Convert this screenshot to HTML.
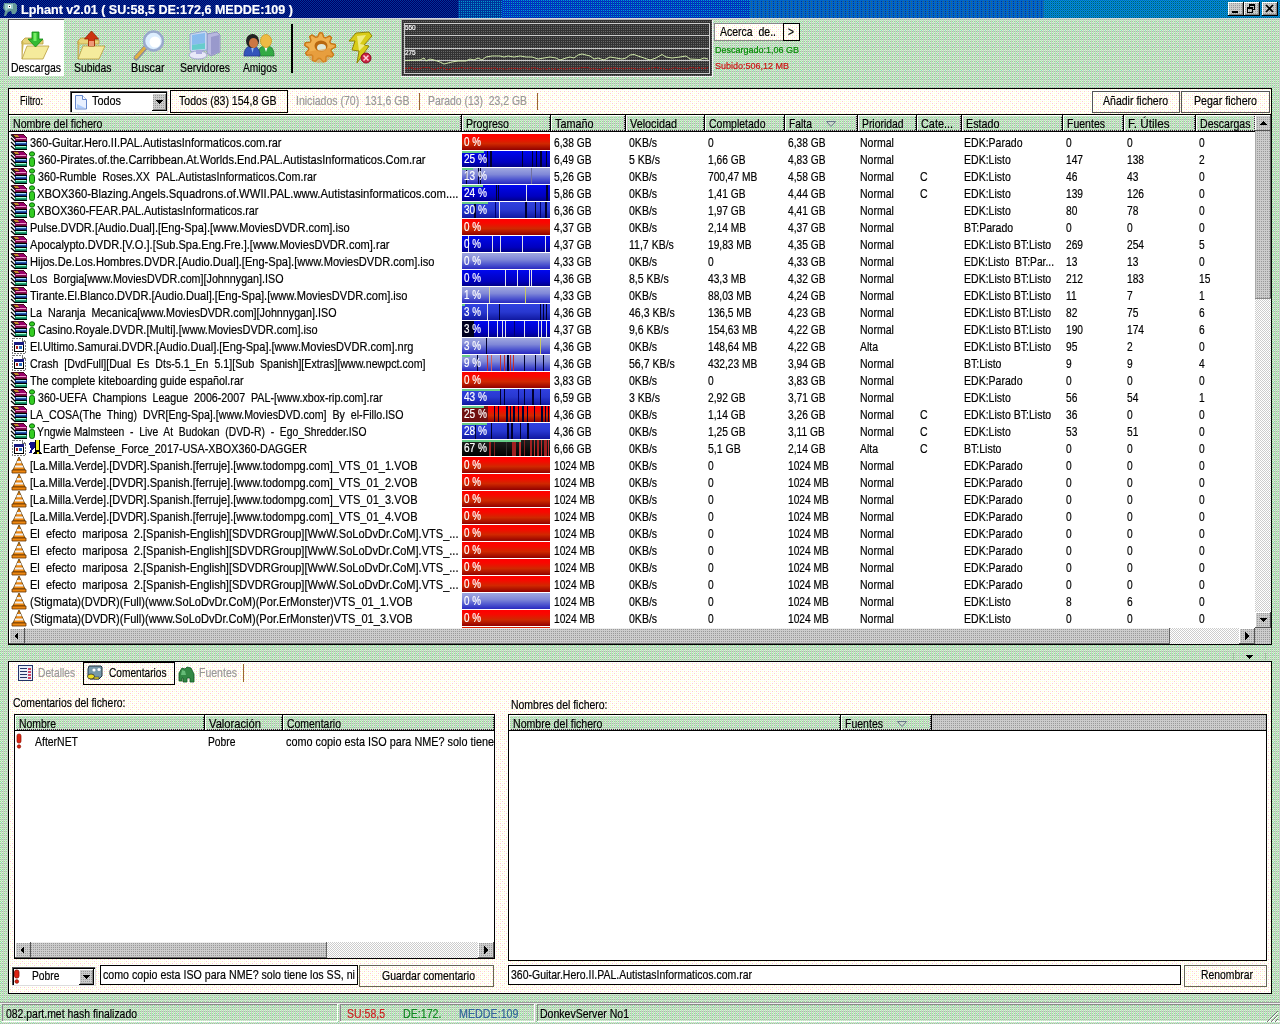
<!DOCTYPE html>
<html><head><meta charset="utf-8"><title>Lphant v2.01</title>
<style>
html,body{margin:0;padding:0;}
body{width:1280px;height:1024px;overflow:hidden;position:relative;background:#bfdcbf;font-family:"Liberation Sans",sans-serif;}
#base{position:absolute;left:0;top:0;width:1280px;height:1024px;display:block;}
#txt{position:absolute;left:0;top:0;width:1280px;height:1024px;will-change:transform;}
.t{position:absolute;white-space:pre;-webkit-text-stroke:.2px;transform-origin:0 0;font-family:"Liberation Sans",sans-serif;}
</style></head><body>
<svg id="base" width="1280" height="1024" viewBox="0 0 1280 1024" shape-rendering="crispEdges">
<defs><pattern id="bg" width="8" height="8" patternUnits="userSpaceOnUse"><rect width="8" height="8" fill="#cccccc"/><rect x="0" y="0" width="1" height="1" fill="#ccffcc"/><rect x="2" y="0" width="1" height="1" fill="#ccffcc"/><rect x="4" y="0" width="1" height="1" fill="#ccffcc"/><rect x="6" y="0" width="1" height="1" fill="#ccffcc"/><rect x="0" y="1" width="1" height="1" fill="#99cc99"/><rect x="1" y="1" width="1" height="1" fill="#ccffcc"/><rect x="2" y="1" width="1" height="1" fill="#99cc99"/><rect x="4" y="1" width="1" height="1" fill="#99cc99"/><rect x="5" y="1" width="1" height="1" fill="#ccffcc"/><rect x="6" y="1" width="1" height="1" fill="#99cc99"/><rect x="0" y="2" width="1" height="1" fill="#ccffcc"/><rect x="2" y="2" width="1" height="1" fill="#ccffcc"/><rect x="4" y="2" width="1" height="1" fill="#ccffcc"/><rect x="6" y="2" width="1" height="1" fill="#ccffcc"/><rect x="0" y="3" width="1" height="1" fill="#99cc99"/><rect x="2" y="3" width="1" height="1" fill="#99cc99"/><rect x="4" y="3" width="1" height="1" fill="#99cc99"/><rect x="6" y="3" width="1" height="1" fill="#99cc99"/><rect x="0" y="4" width="1" height="1" fill="#ccffcc"/><rect x="2" y="4" width="1" height="1" fill="#ccffcc"/><rect x="4" y="4" width="1" height="1" fill="#ccffcc"/><rect x="6" y="4" width="1" height="1" fill="#ccffcc"/><rect x="0" y="5" width="1" height="1" fill="#99cc99"/><rect x="1" y="5" width="1" height="1" fill="#ccffcc"/><rect x="2" y="5" width="1" height="1" fill="#99cc99"/><rect x="4" y="5" width="1" height="1" fill="#99cc99"/><rect x="5" y="5" width="1" height="1" fill="#ccffcc"/><rect x="6" y="5" width="1" height="1" fill="#99cc99"/><rect x="0" y="6" width="1" height="1" fill="#ccffcc"/><rect x="1" y="6" width="1" height="1" fill="#99cccc"/><rect x="2" y="6" width="1" height="1" fill="#ccffcc"/><rect x="4" y="6" width="1" height="1" fill="#ccffcc"/><rect x="6" y="6" width="1" height="1" fill="#ccffcc"/><rect x="0" y="7" width="1" height="1" fill="#99cc99"/><rect x="2" y="7" width="1" height="1" fill="#99cc99"/><rect x="4" y="7" width="1" height="1" fill="#99cc99"/><rect x="6" y="7" width="1" height="1" fill="#99cc99"/></pattern><pattern id="cream" width="8" height="8" patternUnits="userSpaceOnUse"><rect width="8" height="8" fill="#ffffff"/><rect x="2" y="1" width="1" height="1" fill="#ffffcc"/><rect x="4" y="1" width="1" height="1" fill="#ffffcc"/><rect x="6" y="1" width="1" height="1" fill="#ffcccc"/><rect x="0" y="1" width="1" height="1" fill="#ffffcc"/><rect x="2" y="3" width="1" height="1" fill="#ffffcc"/><rect x="4" y="3" width="1" height="1" fill="#ffcccc"/><rect x="6" y="3" width="1" height="1" fill="#ffffcc"/><rect x="0" y="3" width="1" height="1" fill="#ffcccc"/><rect x="2" y="5" width="1" height="1" fill="#ffcccc"/><rect x="4" y="5" width="1" height="1" fill="#ffffcc"/><rect x="6" y="5" width="1" height="1" fill="#ffffcc"/><rect x="0" y="5" width="1" height="1" fill="#ffffcc"/><rect x="2" y="7" width="1" height="1" fill="#ffffcc"/><rect x="4" y="7" width="1" height="1" fill="#ffcccc"/><rect x="6" y="7" width="1" height="1" fill="#ffffcc"/><rect x="0" y="7" width="1" height="1" fill="#ffcccc"/></pattern><pattern id="face" width="2" height="2" patternUnits="userSpaceOnUse"><rect width="2" height="2" fill="#cccccc"/><rect x="1" y="1" width="1" height="1" fill="#999999"/></pattern><pattern id="track" width="2" height="2" patternUnits="userSpaceOnUse"><rect width="2" height="2" fill="#ffffff"/><rect x="0" y="0" width="1" height="1" fill="#cccccc"/><rect x="1" y="1" width="1" height="1" fill="#cccccc"/></pattern><pattern id="gbg" width="2" height="2" patternUnits="userSpaceOnUse"><rect width="2" height="2" fill="#333333"/><rect x="1" y="1" width="1" height="1" fill="#666666"/></pattern><pattern id="tb1" width="2" height="2" patternUnits="userSpaceOnUse"><rect width="2" height="2" fill="#000066"/><rect x="0" y="0" width="1" height="1" fill="#003399"/><rect x="1" y="1" width="1" height="1" fill="#003399"/></pattern><pattern id="tb2" width="2" height="2" patternUnits="userSpaceOnUse"><rect width="2" height="2" fill="#003399"/><rect x="1" y="1" width="1" height="1" fill="#0099cc"/></pattern><pattern id="tb3" width="2" height="2" patternUnits="userSpaceOnUse"><rect width="2" height="2" fill="#0033cc"/><rect x="1" y="0" width="1" height="1" fill="#0099cc"/><rect x="1" y="1" width="1" height="1" fill="#003399"/></pattern><pattern id="tb4" width="4" height="2" patternUnits="userSpaceOnUse"><rect width="4" height="2" fill="#0066cc"/><rect x="1" y="1" width="1" height="1" fill="#003399"/><rect x="3" y="1" width="1" height="1" fill="#336666"/></pattern><pattern id="tb5" width="2" height="2" patternUnits="userSpaceOnUse"><rect width="2" height="2" fill="#0099cc"/><rect x="0" y="0" width="1" height="1" fill="#0066cc"/><rect x="1" y="1" width="1" height="1" fill="#005580"/></pattern><pattern id="shd" width="2" height="2" patternUnits="userSpaceOnUse"><rect width="2" height="2" fill="#cccccc"/><rect x="0" y="0" width="1" height="1" fill="#333333"/><rect x="1" y="1" width="1" height="1" fill="#333333"/></pattern>
<linearGradient id="gR" x1="0" y1="0" x2="0" y2="1"><stop offset="0" stop-color="#ff0000"/><stop offset=".25" stop-color="#f80800"/><stop offset=".6" stop-color="#d02800"/><stop offset=".85" stop-color="#a81000"/><stop offset="1" stop-color="#900000"/></linearGradient>
<linearGradient id="gB" x1="0" y1="0" x2="0" y2="1"><stop offset="0" stop-color="#0008f0"/><stop offset=".3" stop-color="#0004d8"/><stop offset=".7" stop-color="#0000c0"/><stop offset="1" stop-color="#000088"/></linearGradient>
<linearGradient id="gL" x1="0" y1="0" x2="0" y2="1"><stop offset="0" stop-color="#a0a8e0"/><stop offset=".4" stop-color="#8088d8"/><stop offset=".7" stop-color="#5058d0"/><stop offset="1" stop-color="#2828c0"/></linearGradient>
<linearGradient id="gM" x1="0" y1="0" x2="0" y2="1"><stop offset="0" stop-color="#3040e0"/><stop offset=".5" stop-color="#2838d0"/><stop offset="1" stop-color="#1018a0"/></linearGradient>
<linearGradient id="gK" x1="0" y1="0" x2="0" y2="1"><stop offset="0" stop-color="#202020"/><stop offset="1" stop-color="#000000"/></linearGradient>
</defs>
<rect x="0" y="0" width="1280" height="1024" fill="url(#bg)"/>
<rect x="0" y="0" width="458" height="18" fill="url(#tb1)"/>
<rect x="458" y="0" width="44" height="18" fill="url(#tb2)"/>
<rect x="502" y="0" width="248" height="18" fill="url(#tb3)"/>
<rect x="750" y="0" width="294" height="18" fill="url(#tb4)"/>
<rect x="1044" y="0" width="236" height="18" fill="url(#tb5)"/>
<rect x="0" y="18" width="1280" height="1" fill="#d6d8e0"/>
<g shape-rendering="auto"><path d="M4 3h11l2 2v6l-2 3h-3l-1-3-3 1-2 4H4l1-5-2-3z" fill="#669999"/><path d="M5 4h8v5H8l-2 2-1-3z" fill="#99cccc"/><rect x="8" y="5" width="3" height="3" fill="#fff"/><rect x="9" y="6" width="1" height="1" fill="#000"/></g>
<rect x="1228" y="2" width="16" height="14" fill="url(#face)"/>
<rect x="1228" y="2" width="15" height="1" fill="#fff"/>
<rect x="1228" y="2" width="1" height="13" fill="#fff"/>
<rect x="1243" y="2" width="1" height="14" fill="#000"/>
<rect x="1228" y="15" width="16" height="1" fill="#000"/>
<rect x="1242" y="3" width="1" height="12" fill="#888"/>
<rect x="1229" y="14" width="14" height="1" fill="#888"/>
<rect x="1232" y="11" width="6" height="2" fill="#000"/>
<rect x="1244" y="2" width="16" height="14" fill="url(#face)"/>
<rect x="1244" y="2" width="15" height="1" fill="#fff"/>
<rect x="1244" y="2" width="1" height="13" fill="#fff"/>
<rect x="1259" y="2" width="1" height="14" fill="#000"/>
<rect x="1244" y="15" width="16" height="1" fill="#000"/>
<rect x="1258" y="3" width="1" height="12" fill="#888"/>
<rect x="1245" y="14" width="14" height="1" fill="#888"/>
<rect x="1249" y="4" width="6" height="2" fill="#000"/>
<rect x="1249" y="4" width="1" height="4" fill="#000"/>
<rect x="1254" y="4" width="1" height="6" fill="#000"/>
<rect x="1253" y="9" width="2" height="1" fill="#000"/>
<rect x="1247" y="7" width="6" height="2" fill="#000"/>
<rect x="1247" y="7" width="1" height="6" fill="#000"/>
<rect x="1252" y="7" width="1" height="6" fill="#000"/>
<rect x="1247" y="12" width="6" height="1" fill="#000"/>
<rect x="1262" y="2" width="16" height="14" fill="url(#face)"/>
<rect x="1262" y="2" width="15" height="1" fill="#fff"/>
<rect x="1262" y="2" width="1" height="13" fill="#fff"/>
<rect x="1277" y="2" width="1" height="14" fill="#000"/>
<rect x="1262" y="15" width="16" height="1" fill="#000"/>
<rect x="1276" y="3" width="1" height="12" fill="#888"/>
<rect x="1263" y="14" width="14" height="1" fill="#888"/>
<path d="M1266 5l7 7m0-7l-7 7" stroke="#000" stroke-width="1.6" fill="none" shape-rendering="auto"/>
<rect x="8" y="19" width="56" height="57" fill="#ffffff"/>
<rect x="8" y="19" width="1" height="57" fill="#444"/>
<rect x="8" y="19" width="56" height="1" fill="#555"/>
<g transform="translate(21,35)" shape-rendering="auto"><path d="M1 6l3-3h7l2 2h9v4H1z" fill="#e8d47a" stroke="#b89c3c" stroke-width=".8"/><path d="M1 24V7l2 0 0 0h0L1 24z" fill="#d9c25e"/><path d="M1 24l5-13h22l-6 13z" fill="#f5eb9c" stroke="#b89c3c" stroke-width=".8"/><path d="M1 24V6" stroke="#b89c3c" stroke-width=".8"/></g>
<path d="M32 32h7v7h4l-7.500 8-7.500-8h4z" fill="#33bb33" stroke="#118811" stroke-width=".8" shape-rendering="auto"/>
<path d="M33.500 33h3v8h-3z" fill="#77ee66" shape-rendering="auto"/>
<g transform="translate(77,35)" shape-rendering="auto"><path d="M1 6l3-3h7l2 2h9v4H1z" fill="#e8d47a" stroke="#b89c3c" stroke-width=".8"/><path d="M1 24V7l2 0 0 0h0L1 24z" fill="#d9c25e"/><path d="M1 24l5-13h22l-6 13z" fill="#f5eb9c" stroke="#b89c3c" stroke-width=".8"/><path d="M1 24V6" stroke="#b89c3c" stroke-width=".8"/></g>
<path d="M91.500 31l7 8h-4v7h-6v-7h-4z" fill="#cc3311" stroke="#992200" stroke-width=".8" shape-rendering="auto"/>
<path d="M89 41h5v5h-5z" fill="#ee9977" shape-rendering="auto"/>
<g shape-rendering="auto"><path d="M145 48l-9 10" stroke="#8a8a9a" stroke-width="5" stroke-linecap="round"/><path d="M144.500 48l-8.500 9.500" stroke="#e0b040" stroke-width="3" stroke-linecap="round"/><circle cx="153.500" cy="41" r="9.500" fill="#ddeeff" stroke="#99aacc" stroke-width="2.500"/><circle cx="155" cy="42" r="5.500" fill="#ffffff"/></g>
<g shape-rendering="auto"><path d="M207 34l10-2 3 3v17l-9 4-4-3z" fill="#b8b8e0" stroke="#8888bb" stroke-width=".8"/><path d="M211 37l8-2v17l-8 3z" fill="#9999cc"/><path d="M190 34l15-3 2 2v17l-15 2-2-2z" fill="#c8d8f0" stroke="#8899cc" stroke-width=".8"/><path d="M192 35l13-2v10l-13 2z" fill="#88bbee"/><path d="M192 45l13-2v6l-13 1z" fill="#66cccc"/><ellipse cx="198" cy="55" rx="9" ry="4" fill="#e8e8f8" stroke="#9999cc" stroke-width=".8"/><path d="M196 50h6v4h-6z" fill="#aaaadd"/></g>
<g shape-rendering="auto"><path d="M258 56c0-8 3-10 8-10s8 2 8 10z" fill="#33aa44" stroke="#227733" stroke-width=".8"/><path d="M264 46h4l-2 6z" fill="#fff"/><ellipse cx="266" cy="41" rx="5.500" ry="6.500" fill="#eebb44" stroke="#cc9922" stroke-width=".8"/><path d="M244 56c0-7 3-10 8-10s8 3 8 10z" fill="#3355bb" stroke="#223388" stroke-width=".8"/><path d="M251 47h3l-1.500 6z" fill="#99bbee"/><ellipse cx="252.500" cy="41" rx="6.500" ry="7" fill="#222"/><ellipse cx="253.500" cy="43" rx="4.500" ry="5" fill="#cc7744"/></g>
<rect x="291" y="24" width="2" height="49" fill="#000"/>
<g shape-rendering="auto"><polygon points="335.2,44.6 335.5,47.1 331.4,49.1 330.9,51.0 333.6,54.5 332.1,56.7 327.6,55.7 326.0,56.8 325.7,61.2 323.1,61.9 320.3,58.4 318.3,58.3 315.1,61.5 312.6,60.4 312.8,56.0 311.4,54.7 306.8,55.2 305.6,52.9 308.7,49.7 308.5,47.8 304.7,45.3 305.3,42.8 309.9,42.3 311.0,40.7 309.7,36.5 311.9,34.9 315.8,37.3 317.7,36.8 319.6,32.8 322.3,32.9 323.7,37.1 325.5,37.9 329.7,36.0 331.6,37.8 329.8,41.8 330.7,43.5" fill="#f0b050" stroke="#c87818" stroke-width="1.5" stroke-linejoin="round"/><ellipse cx="321" cy="46" rx="6.500" ry="5.500" fill="#b86810"/><ellipse cx="321.500" cy="47.500" rx="4.500" ry="3.500" fill="#dfe8d8"/><path d="M306 52l4 8 8 3 8-1 7-6-3-8z" fill="#e09030" opacity=".55"/></g>
<g shape-rendering="auto"><path d="M356 33l13-1 3 4-8 9 5 1-12 17 2-12-7-1 3-9-6 0z" fill="#d8cc18" stroke="#908408" stroke-width="1"/><path d="M357 36l9-1-6 9 5 1-6 6z" fill="#f0ec80"/><circle cx="366" cy="58" r="5" fill="#cc2244" stroke="#881122" stroke-width="1"/><path d="M363.500 55.500l5 5m0-5l-5 5" stroke="#ffd0d8" stroke-width="1.500"/></g>
<rect x="402" y="20" width="310" height="56" fill="url(#gbg)"/>
<rect x="401" y="19" width="311" height="1" fill="#b0b0b0"/>
<rect x="401" y="20" width="1" height="56" fill="#b0b0b0"/>
<rect x="401" y="76" width="312" height="1" fill="#f4f4f4"/>
<rect x="712" y="20" width="1" height="57" fill="#f4f4f4"/>
<rect x="404" y="23" width="306" height="1" fill="#cccccc"/>
<rect x="404" y="73" width="306" height="1" fill="#cccccc"/>
<rect x="404" y="23" width="1" height="51" fill="#cccccc"/>
<rect x="709" y="23" width="1" height="51" fill="#cccccc"/>
<rect x="404" y="35" width="306" height="1" fill="#cccccc"/>
<rect x="404" y="48" width="306" height="1" fill="#cccccc"/>
<rect x="404" y="60" width="306" height="1" fill="#cccccc"/>
<polyline shape-rendering="auto" fill="none" stroke="#cfe8a8" stroke-width="1" points="405,60.5 420,60 424,58 426,61 430,59 434,60 440,62 444,64 448,63 452,62 458,61 466,61 470,59 474,60 478,58 482,60 486,57 492,56 500,56 504,57 508,56 514,57 520,56 526,57 532,57 538,59 544,58 550,57 556,58 560,60 566,58 570,57 574,58 578,55 582,54 586,55 590,56 594,59 598,58 604,60 610,57 616,58 622,59 626,58 630,55 634,54.5 638,56 644,58 650,60 656,58 662,54.5 666,57 672,58 680,57 686,56 690,59 700,59.5 704,58 708,59"/>
<polyline shape-rendering="auto" fill="none" stroke="#a81818" stroke-width="1.2" stroke-dasharray="2 1" points="405,68.3 408,68.3 411,67.7 414,68.89999999999999 417,68.89999999999999 420,68.3 423,67.7 426,67.7 429,67.7 432,68.89999999999999 435,69.3 438,68.3 441,67.7 444,68.3 447,69.3 450,69.3 453,68.3 456,68.3 459,68.3 462,67.7 465,68.3 468,68.3 471,67.7 474,68.3 477,68.3 480,68.3 483,68.3 486,68.3 489,68.3 492,68.3 495,67.7 498,69.3 501,68.3 504,68.89999999999999 507,69.3 510,68.3 513,68.3 516,68.3 519,68.89999999999999 522,68.3 525,67.7 528,69.3 531,68.3 534,67.7 537,68.3 540,69.3 543,68.3 546,69.3 549,68.3 552,68.89999999999999 555,68.89999999999999 558,69.3 561,68.3 564,68.89999999999999 567,68.89999999999999 570,68.3 573,68.3 576,68.3 579,68.3 582,67.7 585,67.7 588,67.7 591,68.89999999999999 594,68.3 597,69.3 600,69.3 603,68.89999999999999 606,68.3 609,68.3 612,68.3 615,67.7 618,68.89999999999999 621,68.3 624,68.89999999999999 627,68.3 630,68.3 633,68.3 636,68.89999999999999 639,69.3 642,68.3 645,69.3 648,68.3 651,68.3 654,67.7 657,67.7 660,68.3 663,68.3 666,69.3 669,69.3 672,68.3 675,67.7 678,68.3 681,68.3 684,68.3 687,68.89999999999999 690,67.7 693,67.7 696,68.3 699,67.7 702,68.3 705,68.3 708,67.7"/>
<rect x="714" y="23" width="86" height="18" fill="url(#cream)"/>
<rect x="714" y="23" width="70" height="1" fill="#888"/>
<rect x="714" y="40" width="70" height="1" fill="#888"/>
<rect x="714" y="23" width="1" height="18" fill="#888"/>
<rect x="783" y="23" width="17" height="1" fill="#000"/>
<rect x="783" y="40" width="17" height="1" fill="#000"/>
<rect x="783" y="23" width="1" height="18" fill="#000"/>
<rect x="799" y="23" width="1" height="18" fill="#000"/>
<rect x="9" y="89" width="1262" height="25" fill="url(#cream)"/>
<rect x="8" y="88" width="1264" height="1" fill="#000"/>
<rect x="8" y="88" width="1" height="557" fill="#000"/>
<rect x="1271" y="88" width="1" height="557" fill="#000"/>
<rect x="8" y="114" width="1264" height="1" fill="#000"/>
<rect x="70" y="91" width="98" height="22" fill="#ffffff"/>
<rect x="70" y="91" width="98" height="1" fill="#555"/>
<rect x="70" y="91" width="1" height="22" fill="#555"/>
<rect x="71" y="92" width="96" height="1" fill="#000"/>
<rect x="71" y="92" width="1" height="20" fill="#000"/>
<rect x="70" y="112" width="98" height="1" fill="#ddd"/>
<rect x="167" y="91" width="1" height="22" fill="#ddd"/>
<g shape-rendering="auto"><path d="M75.500 95.500h7l4 4v9.500h-11z" fill="#e8f0ff" stroke="#6688cc" stroke-width="1"/><path d="M82.500 95.500v4h4" fill="#fff" stroke="#6688cc" stroke-width="1"/><path d="M77 104l8 4h-8z" fill="#aaccff"/></g>
<rect x="152" y="93" width="15" height="18" fill="url(#face)"/>
<rect x="152" y="93" width="15" height="1" fill="#fff"/>
<rect x="152" y="93" width="1" height="18" fill="#fff"/>
<rect x="166" y="93" width="1" height="18" fill="#000"/>
<rect x="152" y="110" width="15" height="1" fill="#000"/>
<rect x="165" y="94" width="1" height="16" fill="#888"/>
<rect x="153" y="109" width="13" height="1" fill="#888"/>
<path d="M156 100h7l-3.500 4z" fill="#000"/>
<rect x="170" y="90" width="118" height="1" fill="#000"/>
<rect x="170" y="112" width="118" height="1" fill="#000"/>
<rect x="170" y="90" width="1" height="23" fill="#000"/>
<rect x="287" y="90" width="1" height="23" fill="#000"/>
<rect x="419" y="93" width="1" height="17" fill="#996633"/>
<rect x="537" y="93" width="1" height="17" fill="#996633"/>
<rect x="1092" y="91" width="88" height="1" fill="#555"/>
<rect x="1092" y="112" width="88" height="1" fill="#555"/>
<rect x="1092" y="91" width="1" height="22" fill="#555"/>
<rect x="1179" y="91" width="1" height="22" fill="#555"/>
<rect x="1181" y="91" width="89" height="1" fill="#555"/>
<rect x="1181" y="112" width="89" height="1" fill="#555"/>
<rect x="1181" y="91" width="1" height="22" fill="#555"/>
<rect x="1269" y="91" width="1" height="22" fill="#555"/>
<rect x="9" y="132" width="1246" height="512" fill="#ffffff"/>
<rect x="9" y="115" width="1246" height="16" fill="url(#bg)"/>
<rect x="9" y="115" width="452" height="1" fill="#fff"/>
<rect x="9" y="115" width="1" height="16" fill="#fff"/>
<rect x="460" y="116" width="1" height="15" fill="url(#shd)"/>
<rect x="10" y="130" width="451" height="1" fill="url(#shd)"/>
<rect x="461" y="115" width="1" height="16" fill="#000"/>
<rect x="462" y="115" width="88" height="1" fill="#fff"/>
<rect x="462" y="115" width="1" height="16" fill="#fff"/>
<rect x="549" y="116" width="1" height="15" fill="url(#shd)"/>
<rect x="463" y="130" width="87" height="1" fill="url(#shd)"/>
<rect x="550" y="115" width="1" height="16" fill="#000"/>
<rect x="551" y="115" width="74" height="1" fill="#fff"/>
<rect x="551" y="115" width="1" height="16" fill="#fff"/>
<rect x="624" y="116" width="1" height="15" fill="url(#shd)"/>
<rect x="552" y="130" width="73" height="1" fill="url(#shd)"/>
<rect x="625" y="115" width="1" height="16" fill="#000"/>
<rect x="626" y="115" width="78" height="1" fill="#fff"/>
<rect x="626" y="115" width="1" height="16" fill="#fff"/>
<rect x="703" y="116" width="1" height="15" fill="url(#shd)"/>
<rect x="627" y="130" width="77" height="1" fill="url(#shd)"/>
<rect x="704" y="115" width="1" height="16" fill="#000"/>
<rect x="705" y="115" width="79" height="1" fill="#fff"/>
<rect x="705" y="115" width="1" height="16" fill="#fff"/>
<rect x="783" y="116" width="1" height="15" fill="url(#shd)"/>
<rect x="706" y="130" width="78" height="1" fill="url(#shd)"/>
<rect x="784" y="115" width="1" height="16" fill="#000"/>
<rect x="785" y="115" width="72" height="1" fill="#fff"/>
<rect x="785" y="115" width="1" height="16" fill="#fff"/>
<rect x="856" y="116" width="1" height="15" fill="url(#shd)"/>
<rect x="786" y="130" width="71" height="1" fill="url(#shd)"/>
<rect x="857" y="115" width="1" height="16" fill="#000"/>
<path d="M826.5 121.5h9l-4.500 5z" fill="#ccd8cc" stroke="#667788" stroke-width="1" shape-rendering="auto"/>
<rect x="858" y="115" width="58" height="1" fill="#fff"/>
<rect x="858" y="115" width="1" height="16" fill="#fff"/>
<rect x="915" y="116" width="1" height="15" fill="url(#shd)"/>
<rect x="859" y="130" width="57" height="1" fill="url(#shd)"/>
<rect x="916" y="115" width="1" height="16" fill="#000"/>
<rect x="917" y="115" width="44" height="1" fill="#fff"/>
<rect x="917" y="115" width="1" height="16" fill="#fff"/>
<rect x="960" y="116" width="1" height="15" fill="url(#shd)"/>
<rect x="918" y="130" width="43" height="1" fill="url(#shd)"/>
<rect x="961" y="115" width="1" height="16" fill="#000"/>
<rect x="962" y="115" width="100" height="1" fill="#fff"/>
<rect x="962" y="115" width="1" height="16" fill="#fff"/>
<rect x="1061" y="116" width="1" height="15" fill="url(#shd)"/>
<rect x="963" y="130" width="99" height="1" fill="url(#shd)"/>
<rect x="1062" y="115" width="1" height="16" fill="#000"/>
<rect x="1063" y="115" width="60" height="1" fill="#fff"/>
<rect x="1063" y="115" width="1" height="16" fill="#fff"/>
<rect x="1122" y="116" width="1" height="15" fill="url(#shd)"/>
<rect x="1064" y="130" width="59" height="1" fill="url(#shd)"/>
<rect x="1123" y="115" width="1" height="16" fill="#000"/>
<rect x="1124" y="115" width="71" height="1" fill="#fff"/>
<rect x="1124" y="115" width="1" height="16" fill="#fff"/>
<rect x="1194" y="116" width="1" height="15" fill="url(#shd)"/>
<rect x="1125" y="130" width="70" height="1" fill="url(#shd)"/>
<rect x="1195" y="115" width="1" height="16" fill="#000"/>
<rect x="1196" y="115" width="59" height="1" fill="#fff"/>
<rect x="1196" y="115" width="1" height="16" fill="#fff"/>
<rect x="1254" y="116" width="1" height="15" fill="url(#shd)"/>
<rect x="1197" y="130" width="58" height="1" fill="url(#shd)"/>
<rect x="1255" y="115" width="1" height="16" fill="#000"/>
<rect x="9" y="131" width="1247" height="1" fill="#000"/>
<g transform="translate(11,134)"><path d="M0 0h12l4 4H4z" fill="#4a0820"/><path d="M6 1h6l3 3H9z" fill="#99006a"/><path d="M2 1h4l2 2H4z" fill="#c08828"/><path d="M0 1l4 4v11L0 12z" fill="#fff"/><g shape-rendering="auto" stroke="#000" stroke-width="1.300"><path d="M0 0.500l4.500 4.500M0 4l4.500 4.500M0 8l4.500 4.500M0 12l4.500 4"/></g><rect x="4" y="4" width="12" height="4" fill="#8a0a5a"/><rect x="5" y="4" width="10" height="1" fill="#ee99cc"/><rect x="5" y="6" width="10" height="1" fill="#661030"/><rect x="4" y="7" width="12" height="1" fill="#000"/><rect x="4" y="8" width="12" height="4" fill="#102a80"/><rect x="5" y="8" width="10" height="1" fill="#aaddff"/><rect x="5" y="9" width="10" height="1" fill="#2a60a8"/><rect x="4" y="11" width="12" height="1" fill="#000"/><rect x="4" y="12" width="12" height="4" fill="#0a7a55"/><rect x="5" y="12" width="10" height="1" fill="#aaffdd"/><rect x="5" y="13" width="10" height="1" fill="#22a070"/><rect x="4" y="15" width="12" height="1" fill="#000"/></g>
<rect x="462" y="134" width="88" height="16" fill="url(#gR)"/>
<g transform="translate(11,151)"><path d="M0 0h12l4 4H4z" fill="#4a0820"/><path d="M6 1h6l3 3H9z" fill="#99006a"/><path d="M2 1h4l2 2H4z" fill="#c08828"/><path d="M0 1l4 4v11L0 12z" fill="#fff"/><g shape-rendering="auto" stroke="#000" stroke-width="1.300"><path d="M0 0.500l4.500 4.500M0 4l4.500 4.500M0 8l4.500 4.500M0 12l4.500 4"/></g><rect x="4" y="4" width="12" height="4" fill="#8a0a5a"/><rect x="5" y="4" width="10" height="1" fill="#ee99cc"/><rect x="5" y="6" width="10" height="1" fill="#661030"/><rect x="4" y="7" width="12" height="1" fill="#000"/><rect x="4" y="8" width="12" height="4" fill="#102a80"/><rect x="5" y="8" width="10" height="1" fill="#aaddff"/><rect x="5" y="9" width="10" height="1" fill="#2a60a8"/><rect x="4" y="11" width="12" height="1" fill="#000"/><rect x="4" y="12" width="12" height="4" fill="#0a7a55"/><rect x="5" y="12" width="10" height="1" fill="#aaffdd"/><rect x="5" y="13" width="10" height="1" fill="#22a070"/><rect x="4" y="15" width="12" height="1" fill="#000"/></g>
<g shape-rendering="auto"><ellipse cx="32" cy="154" rx="2.600" ry="2.200" fill="#33cc22" stroke="#0a6a0a" stroke-width="1"/><rect x="29.5" y="157.5" width="5" height="9" rx="2.200" fill="#33cc22" stroke="#0a6a0a" stroke-width="1"/></g>
<rect x="462" y="151" width="88" height="16" fill="url(#gB)"/>
<rect x="487" y="151" width="1" height="16" fill="#000030"/>
<rect x="490" y="151" width="2" height="16" fill="#000030"/>
<rect x="522" y="151" width="1" height="16" fill="#000030"/>
<rect x="532" y="151" width="1" height="16" fill="#000030"/>
<rect x="536" y="151" width="1" height="16" fill="#000030"/>
<rect x="540" y="151" width="2" height="16" fill="#000030"/>
<rect x="546" y="151" width="1" height="16" fill="#000030"/>
<rect x="462" y="151" width="22" height="2" fill="#66cc88"/>
<g transform="translate(11,168)"><path d="M0 0h12l4 4H4z" fill="#4a0820"/><path d="M6 1h6l3 3H9z" fill="#99006a"/><path d="M2 1h4l2 2H4z" fill="#c08828"/><path d="M0 1l4 4v11L0 12z" fill="#fff"/><g shape-rendering="auto" stroke="#000" stroke-width="1.300"><path d="M0 0.500l4.500 4.500M0 4l4.500 4.500M0 8l4.500 4.500M0 12l4.500 4"/></g><rect x="4" y="4" width="12" height="4" fill="#8a0a5a"/><rect x="5" y="4" width="10" height="1" fill="#ee99cc"/><rect x="5" y="6" width="10" height="1" fill="#661030"/><rect x="4" y="7" width="12" height="1" fill="#000"/><rect x="4" y="8" width="12" height="4" fill="#102a80"/><rect x="5" y="8" width="10" height="1" fill="#aaddff"/><rect x="5" y="9" width="10" height="1" fill="#2a60a8"/><rect x="4" y="11" width="12" height="1" fill="#000"/><rect x="4" y="12" width="12" height="4" fill="#0a7a55"/><rect x="5" y="12" width="10" height="1" fill="#aaffdd"/><rect x="5" y="13" width="10" height="1" fill="#22a070"/><rect x="4" y="15" width="12" height="1" fill="#000"/></g>
<g shape-rendering="auto"><ellipse cx="32" cy="171" rx="2.600" ry="2.200" fill="#33cc22" stroke="#0a6a0a" stroke-width="1"/><rect x="29.5" y="174.5" width="5" height="9" rx="2.200" fill="#33cc22" stroke="#0a6a0a" stroke-width="1"/></g>
<rect x="462" y="168" width="88" height="16" fill="url(#gL)"/>
<rect x="466" y="168" width="1" height="16" fill="#000030"/>
<rect x="478" y="168" width="1" height="16" fill="#000030"/>
<rect x="480" y="168" width="1" height="16" fill="#000030"/>
<rect x="531" y="168" width="1" height="16" fill="#7070a0"/>
<rect x="462" y="168" width="11" height="2" fill="#66cc88"/>
<g transform="translate(11,185)"><path d="M0 0h12l4 4H4z" fill="#4a0820"/><path d="M6 1h6l3 3H9z" fill="#99006a"/><path d="M2 1h4l2 2H4z" fill="#c08828"/><path d="M0 1l4 4v11L0 12z" fill="#fff"/><g shape-rendering="auto" stroke="#000" stroke-width="1.300"><path d="M0 0.500l4.500 4.500M0 4l4.500 4.500M0 8l4.500 4.500M0 12l4.500 4"/></g><rect x="4" y="4" width="12" height="4" fill="#8a0a5a"/><rect x="5" y="4" width="10" height="1" fill="#ee99cc"/><rect x="5" y="6" width="10" height="1" fill="#661030"/><rect x="4" y="7" width="12" height="1" fill="#000"/><rect x="4" y="8" width="12" height="4" fill="#102a80"/><rect x="5" y="8" width="10" height="1" fill="#aaddff"/><rect x="5" y="9" width="10" height="1" fill="#2a60a8"/><rect x="4" y="11" width="12" height="1" fill="#000"/><rect x="4" y="12" width="12" height="4" fill="#0a7a55"/><rect x="5" y="12" width="10" height="1" fill="#aaffdd"/><rect x="5" y="13" width="10" height="1" fill="#22a070"/><rect x="4" y="15" width="12" height="1" fill="#000"/></g>
<g shape-rendering="auto"><ellipse cx="32" cy="188" rx="2.600" ry="2.200" fill="#33cc22" stroke="#0a6a0a" stroke-width="1"/><rect x="29.5" y="191.5" width="5" height="9" rx="2.200" fill="#33cc22" stroke="#0a6a0a" stroke-width="1"/></g>
<rect x="462" y="185" width="88" height="16" fill="url(#gB)"/>
<rect x="496" y="185" width="1" height="16" fill="#000030"/>
<rect x="498" y="185" width="1" height="16" fill="#000030"/>
<rect x="526" y="185" width="1" height="16" fill="#e0e0e8"/>
<rect x="546" y="185" width="2" height="16" fill="#000030"/>
<rect x="462" y="185" width="21" height="2" fill="#66cc88"/>
<g transform="translate(11,202)"><path d="M0 0h12l4 4H4z" fill="#4a0820"/><path d="M6 1h6l3 3H9z" fill="#99006a"/><path d="M2 1h4l2 2H4z" fill="#c08828"/><path d="M0 1l4 4v11L0 12z" fill="#fff"/><g shape-rendering="auto" stroke="#000" stroke-width="1.300"><path d="M0 0.500l4.500 4.500M0 4l4.500 4.500M0 8l4.500 4.500M0 12l4.500 4"/></g><rect x="4" y="4" width="12" height="4" fill="#8a0a5a"/><rect x="5" y="4" width="10" height="1" fill="#ee99cc"/><rect x="5" y="6" width="10" height="1" fill="#661030"/><rect x="4" y="7" width="12" height="1" fill="#000"/><rect x="4" y="8" width="12" height="4" fill="#102a80"/><rect x="5" y="8" width="10" height="1" fill="#aaddff"/><rect x="5" y="9" width="10" height="1" fill="#2a60a8"/><rect x="4" y="11" width="12" height="1" fill="#000"/><rect x="4" y="12" width="12" height="4" fill="#0a7a55"/><rect x="5" y="12" width="10" height="1" fill="#aaffdd"/><rect x="5" y="13" width="10" height="1" fill="#22a070"/><rect x="4" y="15" width="12" height="1" fill="#000"/></g>
<g shape-rendering="auto"><ellipse cx="32" cy="205" rx="2.600" ry="2.200" fill="#33cc22" stroke="#0a6a0a" stroke-width="1"/><rect x="29.5" y="208.5" width="5" height="9" rx="2.200" fill="#33cc22" stroke="#0a6a0a" stroke-width="1"/></g>
<rect x="462" y="202" width="88" height="16" fill="url(#gM)"/>
<rect x="474" y="202" width="2" height="16" fill="#000030"/>
<rect x="495" y="202" width="1" height="16" fill="#000070"/>
<rect x="499" y="202" width="1" height="16" fill="#e0e0e8"/>
<rect x="525" y="202" width="2" height="16" fill="#000030"/>
<rect x="535" y="202" width="1" height="16" fill="#000030"/>
<rect x="540" y="202" width="1" height="16" fill="#000070"/>
<rect x="545" y="202" width="2" height="16" fill="#000030"/>
<rect x="462" y="202" width="26" height="2" fill="#66cc88"/>
<g transform="translate(11,219)"><path d="M0 0h12l4 4H4z" fill="#4a0820"/><path d="M6 1h6l3 3H9z" fill="#99006a"/><path d="M2 1h4l2 2H4z" fill="#c08828"/><path d="M0 1l4 4v11L0 12z" fill="#fff"/><g shape-rendering="auto" stroke="#000" stroke-width="1.300"><path d="M0 0.500l4.500 4.500M0 4l4.500 4.500M0 8l4.500 4.500M0 12l4.500 4"/></g><rect x="4" y="4" width="12" height="4" fill="#8a0a5a"/><rect x="5" y="4" width="10" height="1" fill="#ee99cc"/><rect x="5" y="6" width="10" height="1" fill="#661030"/><rect x="4" y="7" width="12" height="1" fill="#000"/><rect x="4" y="8" width="12" height="4" fill="#102a80"/><rect x="5" y="8" width="10" height="1" fill="#aaddff"/><rect x="5" y="9" width="10" height="1" fill="#2a60a8"/><rect x="4" y="11" width="12" height="1" fill="#000"/><rect x="4" y="12" width="12" height="4" fill="#0a7a55"/><rect x="5" y="12" width="10" height="1" fill="#aaffdd"/><rect x="5" y="13" width="10" height="1" fill="#22a070"/><rect x="4" y="15" width="12" height="1" fill="#000"/></g>
<rect x="462" y="219" width="88" height="16" fill="url(#gR)"/>
<g transform="translate(11,236)"><path d="M0 0h12l4 4H4z" fill="#4a0820"/><path d="M6 1h6l3 3H9z" fill="#99006a"/><path d="M2 1h4l2 2H4z" fill="#c08828"/><path d="M0 1l4 4v11L0 12z" fill="#fff"/><g shape-rendering="auto" stroke="#000" stroke-width="1.300"><path d="M0 0.500l4.500 4.500M0 4l4.500 4.500M0 8l4.500 4.500M0 12l4.500 4"/></g><rect x="4" y="4" width="12" height="4" fill="#8a0a5a"/><rect x="5" y="4" width="10" height="1" fill="#ee99cc"/><rect x="5" y="6" width="10" height="1" fill="#661030"/><rect x="4" y="7" width="12" height="1" fill="#000"/><rect x="4" y="8" width="12" height="4" fill="#102a80"/><rect x="5" y="8" width="10" height="1" fill="#aaddff"/><rect x="5" y="9" width="10" height="1" fill="#2a60a8"/><rect x="4" y="11" width="12" height="1" fill="#000"/><rect x="4" y="12" width="12" height="4" fill="#0a7a55"/><rect x="5" y="12" width="10" height="1" fill="#aaffdd"/><rect x="5" y="13" width="10" height="1" fill="#22a070"/><rect x="4" y="15" width="12" height="1" fill="#000"/></g>
<rect x="462" y="236" width="88" height="16" fill="url(#gB)"/>
<rect x="468" y="236" width="1" height="16" fill="#e0e0e8"/>
<rect x="492" y="236" width="1" height="16" fill="#e0e0e8"/>
<rect x="500" y="236" width="1" height="16" fill="#e0e0e8"/>
<rect x="522" y="236" width="1" height="16" fill="#e0e0e8"/>
<rect x="545" y="236" width="1" height="16" fill="#e0e0e8"/>
<g transform="translate(11,253)"><path d="M0 0h12l4 4H4z" fill="#4a0820"/><path d="M6 1h6l3 3H9z" fill="#99006a"/><path d="M2 1h4l2 2H4z" fill="#c08828"/><path d="M0 1l4 4v11L0 12z" fill="#fff"/><g shape-rendering="auto" stroke="#000" stroke-width="1.300"><path d="M0 0.500l4.500 4.500M0 4l4.500 4.500M0 8l4.500 4.500M0 12l4.500 4"/></g><rect x="4" y="4" width="12" height="4" fill="#8a0a5a"/><rect x="5" y="4" width="10" height="1" fill="#ee99cc"/><rect x="5" y="6" width="10" height="1" fill="#661030"/><rect x="4" y="7" width="12" height="1" fill="#000"/><rect x="4" y="8" width="12" height="4" fill="#102a80"/><rect x="5" y="8" width="10" height="1" fill="#aaddff"/><rect x="5" y="9" width="10" height="1" fill="#2a60a8"/><rect x="4" y="11" width="12" height="1" fill="#000"/><rect x="4" y="12" width="12" height="4" fill="#0a7a55"/><rect x="5" y="12" width="10" height="1" fill="#aaffdd"/><rect x="5" y="13" width="10" height="1" fill="#22a070"/><rect x="4" y="15" width="12" height="1" fill="#000"/></g>
<rect x="462" y="253" width="88" height="16" fill="url(#gL)"/>
<g transform="translate(11,270)"><path d="M0 0h12l4 4H4z" fill="#4a0820"/><path d="M6 1h6l3 3H9z" fill="#99006a"/><path d="M2 1h4l2 2H4z" fill="#c08828"/><path d="M0 1l4 4v11L0 12z" fill="#fff"/><g shape-rendering="auto" stroke="#000" stroke-width="1.300"><path d="M0 0.500l4.500 4.500M0 4l4.500 4.500M0 8l4.500 4.500M0 12l4.500 4"/></g><rect x="4" y="4" width="12" height="4" fill="#8a0a5a"/><rect x="5" y="4" width="10" height="1" fill="#ee99cc"/><rect x="5" y="6" width="10" height="1" fill="#661030"/><rect x="4" y="7" width="12" height="1" fill="#000"/><rect x="4" y="8" width="12" height="4" fill="#102a80"/><rect x="5" y="8" width="10" height="1" fill="#aaddff"/><rect x="5" y="9" width="10" height="1" fill="#2a60a8"/><rect x="4" y="11" width="12" height="1" fill="#000"/><rect x="4" y="12" width="12" height="4" fill="#0a7a55"/><rect x="5" y="12" width="10" height="1" fill="#aaffdd"/><rect x="5" y="13" width="10" height="1" fill="#22a070"/><rect x="4" y="15" width="12" height="1" fill="#000"/></g>
<rect x="462" y="270" width="88" height="16" fill="url(#gB)"/>
<rect x="505" y="270" width="1" height="16" fill="#e0e0e8"/>
<rect x="517" y="270" width="1" height="16" fill="#e0e0e8"/>
<rect x="529" y="270" width="1" height="16" fill="#e0e0e8"/>
<rect x="531" y="270" width="1" height="16" fill="#e0e0e8"/>
<g transform="translate(11,287)"><path d="M0 0h12l4 4H4z" fill="#4a0820"/><path d="M6 1h6l3 3H9z" fill="#99006a"/><path d="M2 1h4l2 2H4z" fill="#c08828"/><path d="M0 1l4 4v11L0 12z" fill="#fff"/><g shape-rendering="auto" stroke="#000" stroke-width="1.300"><path d="M0 0.500l4.500 4.500M0 4l4.500 4.500M0 8l4.500 4.500M0 12l4.500 4"/></g><rect x="4" y="4" width="12" height="4" fill="#8a0a5a"/><rect x="5" y="4" width="10" height="1" fill="#ee99cc"/><rect x="5" y="6" width="10" height="1" fill="#661030"/><rect x="4" y="7" width="12" height="1" fill="#000"/><rect x="4" y="8" width="12" height="4" fill="#102a80"/><rect x="5" y="8" width="10" height="1" fill="#aaddff"/><rect x="5" y="9" width="10" height="1" fill="#2a60a8"/><rect x="4" y="11" width="12" height="1" fill="#000"/><rect x="4" y="12" width="12" height="4" fill="#0a7a55"/><rect x="5" y="12" width="10" height="1" fill="#aaffdd"/><rect x="5" y="13" width="10" height="1" fill="#22a070"/><rect x="4" y="15" width="12" height="1" fill="#000"/></g>
<rect x="462" y="287" width="88" height="16" fill="url(#gL)"/>
<rect x="489" y="287" width="1" height="16" fill="#d0d0a0"/>
<rect x="525" y="287" width="1" height="16" fill="#c8c860"/>
<g transform="translate(11,304)"><path d="M0 0h12l4 4H4z" fill="#4a0820"/><path d="M6 1h6l3 3H9z" fill="#99006a"/><path d="M2 1h4l2 2H4z" fill="#c08828"/><path d="M0 1l4 4v11L0 12z" fill="#fff"/><g shape-rendering="auto" stroke="#000" stroke-width="1.300"><path d="M0 0.500l4.500 4.500M0 4l4.500 4.500M0 8l4.500 4.500M0 12l4.500 4"/></g><rect x="4" y="4" width="12" height="4" fill="#8a0a5a"/><rect x="5" y="4" width="10" height="1" fill="#ee99cc"/><rect x="5" y="6" width="10" height="1" fill="#661030"/><rect x="4" y="7" width="12" height="1" fill="#000"/><rect x="4" y="8" width="12" height="4" fill="#102a80"/><rect x="5" y="8" width="10" height="1" fill="#aaddff"/><rect x="5" y="9" width="10" height="1" fill="#2a60a8"/><rect x="4" y="11" width="12" height="1" fill="#000"/><rect x="4" y="12" width="12" height="4" fill="#0a7a55"/><rect x="5" y="12" width="10" height="1" fill="#aaffdd"/><rect x="5" y="13" width="10" height="1" fill="#22a070"/><rect x="4" y="15" width="12" height="1" fill="#000"/></g>
<rect x="462" y="304" width="88" height="16" fill="url(#gM)"/>
<rect x="487" y="304" width="1" height="16" fill="#e0e0e8"/>
<rect x="499" y="304" width="1" height="16" fill="#000030"/>
<rect x="540" y="304" width="1" height="16" fill="#000030"/>
<rect x="543" y="304" width="1" height="16" fill="#000030"/>
<rect x="546" y="304" width="1" height="16" fill="#000030"/>
<rect x="462" y="304" width="3" height="2" fill="#66cc88"/>
<g transform="translate(11,321)"><path d="M0 0h12l4 4H4z" fill="#4a0820"/><path d="M6 1h6l3 3H9z" fill="#99006a"/><path d="M2 1h4l2 2H4z" fill="#c08828"/><path d="M0 1l4 4v11L0 12z" fill="#fff"/><g shape-rendering="auto" stroke="#000" stroke-width="1.300"><path d="M0 0.500l4.500 4.500M0 4l4.500 4.500M0 8l4.500 4.500M0 12l4.500 4"/></g><rect x="4" y="4" width="12" height="4" fill="#8a0a5a"/><rect x="5" y="4" width="10" height="1" fill="#ee99cc"/><rect x="5" y="6" width="10" height="1" fill="#661030"/><rect x="4" y="7" width="12" height="1" fill="#000"/><rect x="4" y="8" width="12" height="4" fill="#102a80"/><rect x="5" y="8" width="10" height="1" fill="#aaddff"/><rect x="5" y="9" width="10" height="1" fill="#2a60a8"/><rect x="4" y="11" width="12" height="1" fill="#000"/><rect x="4" y="12" width="12" height="4" fill="#0a7a55"/><rect x="5" y="12" width="10" height="1" fill="#aaffdd"/><rect x="5" y="13" width="10" height="1" fill="#22a070"/><rect x="4" y="15" width="12" height="1" fill="#000"/></g>
<g shape-rendering="auto"><ellipse cx="32" cy="324" rx="2.600" ry="2.200" fill="#33cc22" stroke="#0a6a0a" stroke-width="1"/><rect x="29.5" y="327.5" width="5" height="9" rx="2.200" fill="#33cc22" stroke="#0a6a0a" stroke-width="1"/></g>
<rect x="462" y="321" width="88" height="16" fill="url(#gB)"/>
<rect x="462" y="321" width="12" height="16" fill="#000020"/>
<rect x="488" y="321" width="1" height="16" fill="#e0e0e8"/>
<rect x="497" y="321" width="1" height="16" fill="#e0e0e8"/>
<rect x="502" y="321" width="1" height="16" fill="#e0e0e8"/>
<rect x="505" y="321" width="1" height="16" fill="#e0e0e8"/>
<rect x="514" y="321" width="1" height="16" fill="#000070"/>
<rect x="524" y="321" width="1" height="16" fill="#e0e0e8"/>
<rect x="538" y="321" width="1" height="16" fill="#e0e0e8"/>
<rect x="541" y="321" width="1" height="16" fill="#e0e0e8"/>
<rect x="546" y="321" width="1" height="16" fill="#e0e0e8"/>
<g transform="translate(12,338)"><path d="M.5 .5h10l3 3v12h-13z" fill="#fff" stroke="#777" stroke-width="1" stroke-dasharray="2 1"/><path d="M10.500 .5v3h3" fill="none" stroke="#777" stroke-width="1"/><rect x="2.500" y="4.500" width="9" height="9" fill="#fff" stroke="#000" stroke-width="1"/><rect x="2" y="4" width="10" height="3" fill="#1a1a80"/><rect x="4" y="8" width="2" height="3" fill="#aa2222"/><rect x="7" y="8" width="3" height="3" fill="#2266bb"/></g>
<rect x="462" y="338" width="88" height="16" fill="url(#gL)"/>
<rect x="486" y="338" width="1" height="16" fill="#000030"/>
<rect x="540" y="338" width="1" height="16" fill="#c8c860"/>
<g transform="translate(12,355)"><path d="M.5 .5h10l3 3v12h-13z" fill="#fff" stroke="#777" stroke-width="1" stroke-dasharray="2 1"/><path d="M10.500 .5v3h3" fill="none" stroke="#777" stroke-width="1"/><rect x="2.500" y="4.500" width="9" height="9" fill="#fff" stroke="#000" stroke-width="1"/><rect x="2" y="4" width="10" height="3" fill="#1a1a80"/><rect x="4" y="8" width="2" height="3" fill="#aa2222"/><rect x="7" y="8" width="3" height="3" fill="#2266bb"/></g>
<rect x="462" y="355" width="88" height="16" fill="url(#gL)"/>
<rect x="477" y="355" width="1" height="16" fill="#000030"/>
<rect x="487" y="355" width="1" height="16" fill="#c03030"/>
<rect x="491" y="355" width="1" height="16" fill="#d06060"/>
<rect x="500" y="355" width="1" height="16" fill="#c03030"/>
<rect x="504" y="355" width="1" height="16" fill="#c03030"/>
<rect x="507" y="355" width="2" height="16" fill="#000030"/>
<rect x="510" y="355" width="1" height="16" fill="#c03030"/>
<rect x="513" y="355" width="1" height="16" fill="#c03030"/>
<rect x="524" y="355" width="1" height="16" fill="#000030"/>
<rect x="535" y="355" width="1" height="16" fill="#000030"/>
<rect x="543" y="355" width="1" height="16" fill="#000030"/>
<rect x="462" y="355" width="8" height="2" fill="#66cc88"/>
<g transform="translate(11,372)"><path d="M0 0h12l4 4H4z" fill="#4a0820"/><path d="M6 1h6l3 3H9z" fill="#99006a"/><path d="M2 1h4l2 2H4z" fill="#c08828"/><path d="M0 1l4 4v11L0 12z" fill="#fff"/><g shape-rendering="auto" stroke="#000" stroke-width="1.300"><path d="M0 0.500l4.500 4.500M0 4l4.500 4.500M0 8l4.500 4.500M0 12l4.500 4"/></g><rect x="4" y="4" width="12" height="4" fill="#8a0a5a"/><rect x="5" y="4" width="10" height="1" fill="#ee99cc"/><rect x="5" y="6" width="10" height="1" fill="#661030"/><rect x="4" y="7" width="12" height="1" fill="#000"/><rect x="4" y="8" width="12" height="4" fill="#102a80"/><rect x="5" y="8" width="10" height="1" fill="#aaddff"/><rect x="5" y="9" width="10" height="1" fill="#2a60a8"/><rect x="4" y="11" width="12" height="1" fill="#000"/><rect x="4" y="12" width="12" height="4" fill="#0a7a55"/><rect x="5" y="12" width="10" height="1" fill="#aaffdd"/><rect x="5" y="13" width="10" height="1" fill="#22a070"/><rect x="4" y="15" width="12" height="1" fill="#000"/></g>
<rect x="462" y="372" width="88" height="16" fill="url(#gR)"/>
<g transform="translate(11,389)"><path d="M0 0h12l4 4H4z" fill="#4a0820"/><path d="M6 1h6l3 3H9z" fill="#99006a"/><path d="M2 1h4l2 2H4z" fill="#c08828"/><path d="M0 1l4 4v11L0 12z" fill="#fff"/><g shape-rendering="auto" stroke="#000" stroke-width="1.300"><path d="M0 0.500l4.500 4.500M0 4l4.500 4.500M0 8l4.500 4.500M0 12l4.500 4"/></g><rect x="4" y="4" width="12" height="4" fill="#8a0a5a"/><rect x="5" y="4" width="10" height="1" fill="#ee99cc"/><rect x="5" y="6" width="10" height="1" fill="#661030"/><rect x="4" y="7" width="12" height="1" fill="#000"/><rect x="4" y="8" width="12" height="4" fill="#102a80"/><rect x="5" y="8" width="10" height="1" fill="#aaddff"/><rect x="5" y="9" width="10" height="1" fill="#2a60a8"/><rect x="4" y="11" width="12" height="1" fill="#000"/><rect x="4" y="12" width="12" height="4" fill="#0a7a55"/><rect x="5" y="12" width="10" height="1" fill="#aaffdd"/><rect x="5" y="13" width="10" height="1" fill="#22a070"/><rect x="4" y="15" width="12" height="1" fill="#000"/></g>
<g shape-rendering="auto"><ellipse cx="32" cy="392" rx="2.600" ry="2.200" fill="#33cc22" stroke="#0a6a0a" stroke-width="1"/><rect x="29.5" y="395.5" width="5" height="9" rx="2.200" fill="#33cc22" stroke="#0a6a0a" stroke-width="1"/></g>
<rect x="462" y="389" width="88" height="16" fill="url(#gM)"/>
<rect x="500" y="389" width="1" height="16" fill="#000030"/>
<rect x="504" y="389" width="1" height="16" fill="#000030"/>
<rect x="518" y="389" width="1" height="16" fill="#000070"/>
<rect x="524" y="389" width="1" height="16" fill="#000030"/>
<rect x="532" y="389" width="2" height="16" fill="#000030"/>
<rect x="540" y="389" width="1" height="16" fill="#000030"/>
<rect x="462" y="389" width="38" height="2" fill="#66cc88"/>
<g transform="translate(11,406)"><path d="M0 0h12l4 4H4z" fill="#4a0820"/><path d="M6 1h6l3 3H9z" fill="#99006a"/><path d="M2 1h4l2 2H4z" fill="#c08828"/><path d="M0 1l4 4v11L0 12z" fill="#fff"/><g shape-rendering="auto" stroke="#000" stroke-width="1.300"><path d="M0 0.500l4.500 4.500M0 4l4.500 4.500M0 8l4.500 4.500M0 12l4.500 4"/></g><rect x="4" y="4" width="12" height="4" fill="#8a0a5a"/><rect x="5" y="4" width="10" height="1" fill="#ee99cc"/><rect x="5" y="6" width="10" height="1" fill="#661030"/><rect x="4" y="7" width="12" height="1" fill="#000"/><rect x="4" y="8" width="12" height="4" fill="#102a80"/><rect x="5" y="8" width="10" height="1" fill="#aaddff"/><rect x="5" y="9" width="10" height="1" fill="#2a60a8"/><rect x="4" y="11" width="12" height="1" fill="#000"/><rect x="4" y="12" width="12" height="4" fill="#0a7a55"/><rect x="5" y="12" width="10" height="1" fill="#aaffdd"/><rect x="5" y="13" width="10" height="1" fill="#22a070"/><rect x="4" y="15" width="12" height="1" fill="#000"/></g>
<rect x="462" y="406" width="88" height="16" fill="url(#gR)"/>
<rect x="462" y="406" width="26" height="16" fill="#701010"/>
<rect x="494" y="406" width="1" height="16" fill="#000030"/>
<rect x="498" y="406" width="1" height="16" fill="#000030"/>
<rect x="506" y="406" width="2" height="16" fill="#000030"/>
<rect x="510" y="406" width="1" height="16" fill="#000030"/>
<rect x="513" y="406" width="2" height="16" fill="#000030"/>
<rect x="518" y="406" width="1" height="16" fill="#000030"/>
<rect x="522" y="406" width="2" height="16" fill="#000030"/>
<rect x="527" y="406" width="1" height="16" fill="#000030"/>
<rect x="534" y="406" width="1" height="16" fill="#000030"/>
<rect x="541" y="406" width="2" height="16" fill="#000030"/>
<rect x="545" y="406" width="1" height="16" fill="#000030"/>
<rect x="548" y="406" width="1" height="16" fill="#000030"/>
<rect x="462" y="406" width="22" height="2" fill="#66cc88"/>
<g transform="translate(11,423)"><path d="M0 0h12l4 4H4z" fill="#4a0820"/><path d="M6 1h6l3 3H9z" fill="#99006a"/><path d="M2 1h4l2 2H4z" fill="#c08828"/><path d="M0 1l4 4v11L0 12z" fill="#fff"/><g shape-rendering="auto" stroke="#000" stroke-width="1.300"><path d="M0 0.500l4.500 4.500M0 4l4.500 4.500M0 8l4.500 4.500M0 12l4.500 4"/></g><rect x="4" y="4" width="12" height="4" fill="#8a0a5a"/><rect x="5" y="4" width="10" height="1" fill="#ee99cc"/><rect x="5" y="6" width="10" height="1" fill="#661030"/><rect x="4" y="7" width="12" height="1" fill="#000"/><rect x="4" y="8" width="12" height="4" fill="#102a80"/><rect x="5" y="8" width="10" height="1" fill="#aaddff"/><rect x="5" y="9" width="10" height="1" fill="#2a60a8"/><rect x="4" y="11" width="12" height="1" fill="#000"/><rect x="4" y="12" width="12" height="4" fill="#0a7a55"/><rect x="5" y="12" width="10" height="1" fill="#aaffdd"/><rect x="5" y="13" width="10" height="1" fill="#22a070"/><rect x="4" y="15" width="12" height="1" fill="#000"/></g>
<g shape-rendering="auto"><ellipse cx="32" cy="426" rx="2.600" ry="2.200" fill="#33cc22" stroke="#0a6a0a" stroke-width="1"/><rect x="29.5" y="429.5" width="5" height="9" rx="2.200" fill="#33cc22" stroke="#0a6a0a" stroke-width="1"/></g>
<rect x="462" y="423" width="88" height="16" fill="url(#gM)"/>
<rect x="475" y="423" width="1" height="16" fill="#000030"/>
<rect x="491" y="423" width="1" height="16" fill="#000030"/>
<rect x="507" y="423" width="2" height="16" fill="#000030"/>
<rect x="511" y="423" width="2" height="16" fill="#000030"/>
<rect x="520" y="423" width="1" height="16" fill="#000030"/>
<rect x="527" y="423" width="2" height="16" fill="#000030"/>
<rect x="462" y="423" width="25" height="2" fill="#66cc88"/>
<g transform="translate(12,440)"><path d="M.5 .5h10l3 3v12h-13z" fill="#fff" stroke="#777" stroke-width="1" stroke-dasharray="2 1"/><path d="M10.500 .5v3h3" fill="none" stroke="#777" stroke-width="1"/><rect x="2.500" y="4.500" width="9" height="9" fill="#fff" stroke="#000" stroke-width="1"/><rect x="2" y="4" width="10" height="3" fill="#1a1a80"/><rect x="4" y="8" width="2" height="3" fill="#aa2222"/><rect x="7" y="8" width="3" height="3" fill="#2266bb"/></g>
<g transform="translate(29,439)"><path d="M0 4l2-1h4v5l-3 4 0 2H0l2-4z" fill="#111188"/><rect x="6" y="1" width="5" height="11" fill="#000"/><rect x="7" y="1" width="3" height="10" fill="#eeee22"/><path d="M6 12h5l2 3H4z" fill="#000"/><rect x="8" y="13" width="2" height="2" fill="#eeee22"/></g>
<rect x="462" y="440" width="88" height="16" fill="url(#gK)"/>
<rect x="489" y="440" width="2" height="16" fill="#a02020"/>
<rect x="494" y="440" width="1" height="16" fill="#802020"/>
<rect x="506" y="440" width="1" height="16" fill="#303030"/>
<rect x="512" y="440" width="4" height="16" fill="#a02020"/>
<rect x="519" y="440" width="2" height="16" fill="#c03030"/>
<rect x="524" y="440" width="1" height="16" fill="#802020"/>
<rect x="530" y="440" width="2" height="16" fill="#a02020"/>
<rect x="534" y="440" width="1" height="16" fill="#c03030"/>
<rect x="537" y="440" width="2" height="16" fill="#a02020"/>
<rect x="541" y="440" width="1" height="16" fill="#c03030"/>
<rect x="544" y="440" width="3" height="16" fill="#a02020"/>
<rect x="548" y="440" width="1" height="16" fill="#c03030"/>
<rect x="462" y="440" width="59" height="2" fill="#66cc88"/>
<g transform="translate(12,457)" shape-rendering="auto"><path d="M7 0L13 13H1z" fill="#ee8811" stroke="#553300" stroke-width=".8"/><path d="M5.200 4h3.600l.9 2.200H4.300z" fill="#eee"/><path d="M3.300 8.500h7.400l.8 2H2.500z" fill="#eee"/><path d="M0 13h14v3H0z" fill="#ee8811" stroke="#663300" stroke-width=".8"/></g>
<rect x="462" y="457" width="88" height="16" fill="url(#gR)"/>
<g transform="translate(12,474)" shape-rendering="auto"><path d="M7 0L13 13H1z" fill="#ee8811" stroke="#553300" stroke-width=".8"/><path d="M5.200 4h3.600l.9 2.200H4.300z" fill="#eee"/><path d="M3.300 8.500h7.400l.8 2H2.500z" fill="#eee"/><path d="M0 13h14v3H0z" fill="#ee8811" stroke="#663300" stroke-width=".8"/></g>
<rect x="462" y="474" width="88" height="16" fill="url(#gR)"/>
<g transform="translate(12,491)" shape-rendering="auto"><path d="M7 0L13 13H1z" fill="#ee8811" stroke="#553300" stroke-width=".8"/><path d="M5.200 4h3.600l.9 2.200H4.300z" fill="#eee"/><path d="M3.300 8.500h7.400l.8 2H2.500z" fill="#eee"/><path d="M0 13h14v3H0z" fill="#ee8811" stroke="#663300" stroke-width=".8"/></g>
<rect x="462" y="491" width="88" height="16" fill="url(#gR)"/>
<g transform="translate(12,508)" shape-rendering="auto"><path d="M7 0L13 13H1z" fill="#ee8811" stroke="#553300" stroke-width=".8"/><path d="M5.200 4h3.600l.9 2.200H4.300z" fill="#eee"/><path d="M3.300 8.500h7.400l.8 2H2.500z" fill="#eee"/><path d="M0 13h14v3H0z" fill="#ee8811" stroke="#663300" stroke-width=".8"/></g>
<rect x="462" y="508" width="88" height="16" fill="url(#gR)"/>
<g transform="translate(12,525)" shape-rendering="auto"><path d="M7 0L13 13H1z" fill="#ee8811" stroke="#553300" stroke-width=".8"/><path d="M5.200 4h3.600l.9 2.200H4.300z" fill="#eee"/><path d="M3.300 8.500h7.400l.8 2H2.500z" fill="#eee"/><path d="M0 13h14v3H0z" fill="#ee8811" stroke="#663300" stroke-width=".8"/></g>
<rect x="462" y="525" width="88" height="16" fill="url(#gR)"/>
<g transform="translate(12,542)" shape-rendering="auto"><path d="M7 0L13 13H1z" fill="#ee8811" stroke="#553300" stroke-width=".8"/><path d="M5.200 4h3.600l.9 2.200H4.300z" fill="#eee"/><path d="M3.300 8.500h7.400l.8 2H2.500z" fill="#eee"/><path d="M0 13h14v3H0z" fill="#ee8811" stroke="#663300" stroke-width=".8"/></g>
<rect x="462" y="542" width="88" height="16" fill="url(#gR)"/>
<g transform="translate(12,559)" shape-rendering="auto"><path d="M7 0L13 13H1z" fill="#ee8811" stroke="#553300" stroke-width=".8"/><path d="M5.200 4h3.600l.9 2.200H4.300z" fill="#eee"/><path d="M3.300 8.500h7.400l.8 2H2.500z" fill="#eee"/><path d="M0 13h14v3H0z" fill="#ee8811" stroke="#663300" stroke-width=".8"/></g>
<rect x="462" y="559" width="88" height="16" fill="url(#gR)"/>
<g transform="translate(12,576)" shape-rendering="auto"><path d="M7 0L13 13H1z" fill="#ee8811" stroke="#553300" stroke-width=".8"/><path d="M5.200 4h3.600l.9 2.200H4.300z" fill="#eee"/><path d="M3.300 8.500h7.400l.8 2H2.500z" fill="#eee"/><path d="M0 13h14v3H0z" fill="#ee8811" stroke="#663300" stroke-width=".8"/></g>
<rect x="462" y="576" width="88" height="16" fill="url(#gR)"/>
<g transform="translate(12,593)" shape-rendering="auto"><path d="M7 0L13 13H1z" fill="#ee8811" stroke="#553300" stroke-width=".8"/><path d="M5.200 4h3.600l.9 2.200H4.300z" fill="#eee"/><path d="M3.300 8.500h7.400l.8 2H2.500z" fill="#eee"/><path d="M0 13h14v3H0z" fill="#ee8811" stroke="#663300" stroke-width=".8"/></g>
<rect x="462" y="593" width="88" height="16" fill="url(#gL)"/>
<g transform="translate(12,610)" shape-rendering="auto"><path d="M7 0L13 13H1z" fill="#ee8811" stroke="#553300" stroke-width=".8"/><path d="M5.200 4h3.600l.9 2.200H4.300z" fill="#eee"/><path d="M3.300 8.500h7.400l.8 2H2.500z" fill="#eee"/><path d="M0 13h14v3H0z" fill="#ee8811" stroke="#663300" stroke-width=".8"/></g>
<rect x="462" y="610" width="88" height="16" fill="url(#gR)"/>
<rect x="462" y="627" width="88" height="1" fill="url(#gR)"/>
<rect x="1255" y="132" width="16" height="480" fill="url(#track)"/>
<rect x="1255" y="115" width="16" height="16" fill="url(#face)"/>
<rect x="1255" y="115" width="16" height="1" fill="#fff"/>
<rect x="1255" y="115" width="1" height="16" fill="#fff"/>
<rect x="1270" y="115" width="1" height="16" fill="#555"/>
<rect x="1255" y="130" width="16" height="1" fill="#555"/>
<path d="M1259 125h8l-4-4z" fill="#000"/>
<rect x="1255" y="131" width="16" height="168" fill="url(#face)"/>
<rect x="1255" y="131" width="1" height="168" fill="#aaa"/>
<rect x="1270" y="131" width="1" height="168" fill="#666"/>
<rect x="1255" y="298" width="16" height="1" fill="#888"/>
<rect x="1255" y="612" width="16" height="16" fill="url(#face)"/>
<rect x="1255" y="612" width="16" height="1" fill="#fff"/>
<rect x="1255" y="612" width="1" height="16" fill="#fff"/>
<rect x="1270" y="612" width="1" height="16" fill="#555"/>
<rect x="1255" y="627" width="16" height="1" fill="#555"/>
<path d="M1259 618h8l-4 4z" fill="#000"/>
<rect x="9" y="628" width="1246" height="16" fill="url(#track)"/>
<rect x="9" y="628" width="16" height="16" fill="url(#face)"/>
<rect x="9" y="628" width="16" height="1" fill="#fff"/>
<rect x="9" y="628" width="1" height="16" fill="#fff"/>
<rect x="24" y="628" width="1" height="16" fill="#555"/>
<rect x="9" y="643" width="16" height="1" fill="#555"/>
<path d="M18 632v8l-4-4z" fill="#000"/>
<rect x="25" y="628" width="1145" height="16" fill="url(#face)"/>
<rect x="25" y="628" width="1145" height="1" fill="#eee"/>
<rect x="25" y="643" width="1145" height="1" fill="#666"/>
<rect x="1169" y="628" width="1" height="16" fill="#666"/>
<rect x="1239" y="628" width="16" height="16" fill="url(#face)"/>
<rect x="1239" y="628" width="16" height="1" fill="#fff"/>
<rect x="1239" y="628" width="1" height="16" fill="#fff"/>
<rect x="1254" y="628" width="1" height="16" fill="#555"/>
<rect x="1239" y="643" width="16" height="1" fill="#555"/>
<path d="M1245 632v8l4-4z" fill="#000"/>
<rect x="1255" y="628" width="16" height="16" fill="url(#face)"/>
<rect x="8" y="644" width="1264" height="1" fill="#000"/>
<path d="M1246 655h7l-3.500 4z" fill="#000"/>
<rect x="1233" y="653" width="1" height="7" fill="#aabbaa"/>
<rect x="1265" y="653" width="1" height="7" fill="#aabbaa"/>
<rect x="9" y="662" width="1262" height="331" fill="url(#cream)"/>
<rect x="8" y="661" width="1264" height="1" fill="#000"/>
<rect x="8" y="661" width="1" height="333" fill="#000"/>
<rect x="1271" y="661" width="1" height="333" fill="#000"/>
<rect x="8" y="993" width="1264" height="1" fill="#000"/>
<g transform="translate(18,665)"><rect x=".5" y=".5" width="14" height="15" fill="#e8eef8" stroke="#223366" stroke-width="1"/><path d="M2 3.500h7M2 6.500h7M2 9.500h7M2 12.500h7" stroke="#223366" stroke-width="1"/><rect x="10" y="3" width="3" height="2" fill="#cc4466"/><rect x="10" y="6" width="3" height="2" fill="#cc4466"/><rect x="10" y="9" width="3" height="2" fill="#cc4466"/><rect x="10" y="12" width="3" height="2" fill="#cc4466"/></g>
<rect x="83" y="662" width="92" height="1" fill="#000"/>
<rect x="83" y="684" width="92" height="1" fill="#000"/>
<rect x="83" y="662" width="1" height="23" fill="#000"/>
<rect x="174" y="662" width="1" height="23" fill="#000"/>
<g shape-rendering="auto"><path d="M89 666h12l1 1v9l-3 3h-9l-2-2v-8z" fill="#7799aa" stroke="#223344" stroke-width="1"/><circle cx="94" cy="670" r="1.600" fill="#fff"/><circle cx="99" cy="669.500" r="1.600" fill="#fff"/><ellipse cx="91" cy="676.500" rx="3.500" ry="2.500" fill="#eedd22" stroke="#333" stroke-width=".8"/><path d="M94 677h5v2h-5z" fill="#eedd22" stroke="#333" stroke-width=".6"/></g>
<g shape-rendering="auto"><path d="M179 681v-8l3-5 3 1 2-2 4 1 3 6v8h-4v-4h-3v4h-4v-4h-1v3z" fill="#338844" stroke="#115522" stroke-width=".8"/><path d="M182 670l3 1 1 4h-5z" fill="#66bb77"/></g>
<rect x="243" y="664" width="1" height="18" fill="#996633"/>
<rect x="14" y="714" width="481" height="245" fill="#ffffff"/>
<rect x="14" y="714" width="481" height="1" fill="#000"/>
<rect x="14" y="714" width="1" height="245" fill="#000"/>
<rect x="494" y="714" width="1" height="245" fill="#000"/>
<rect x="14" y="958" width="481" height="1" fill="#000"/>
<rect x="15" y="715" width="479" height="16" fill="url(#bg)"/>
<rect x="15" y="715" width="189" height="1" fill="#fff"/>
<rect x="15" y="715" width="1" height="15" fill="#fff"/>
<rect x="203" y="716" width="1" height="14" fill="url(#shd)"/>
<rect x="16" y="729" width="188" height="1" fill="url(#shd)"/>
<rect x="204" y="715" width="1" height="15" fill="#000"/>
<rect x="205" y="715" width="77" height="1" fill="#fff"/>
<rect x="205" y="715" width="1" height="15" fill="#fff"/>
<rect x="281" y="716" width="1" height="14" fill="url(#shd)"/>
<rect x="206" y="729" width="76" height="1" fill="url(#shd)"/>
<rect x="282" y="715" width="1" height="15" fill="#000"/>
<rect x="283" y="715" width="211" height="1" fill="#fff"/>
<rect x="283" y="715" width="1" height="15" fill="#fff"/>
<rect x="493" y="716" width="1" height="14" fill="url(#shd)"/>
<rect x="284" y="729" width="210" height="1" fill="url(#shd)"/>
<rect x="494" y="715" width="1" height="15" fill="#000"/>
<rect x="15" y="730" width="479" height="1" fill="#000"/>
<g shape-rendering="auto"><rect x="17" y="734" width="4" height="9" rx="1.800" fill="#dd2211" stroke="#881100" stroke-width=".7"/><circle cx="19" cy="746.500" r="1.700" fill="#dd2211" stroke="#881100" stroke-width=".7"/></g>
<rect x="15" y="942" width="479" height="16" fill="url(#track)"/>
<rect x="15" y="942" width="16" height="16" fill="url(#face)"/>
<rect x="15" y="942" width="16" height="1" fill="#fff"/>
<rect x="15" y="942" width="1" height="16" fill="#fff"/>
<rect x="30" y="942" width="1" height="16" fill="#555"/>
<rect x="15" y="957" width="16" height="1" fill="#555"/>
<path d="M24 946v8l-4-4z" fill="#000"/>
<rect x="31" y="942" width="296" height="16" fill="url(#face)"/>
<rect x="31" y="942" width="296" height="1" fill="#eee"/>
<rect x="31" y="957" width="296" height="1" fill="#666"/>
<rect x="326" y="942" width="1" height="16" fill="#666"/>
<rect x="478" y="942" width="16" height="16" fill="url(#face)"/>
<rect x="478" y="942" width="16" height="1" fill="#fff"/>
<rect x="478" y="942" width="1" height="16" fill="#fff"/>
<rect x="493" y="942" width="1" height="16" fill="#555"/>
<rect x="478" y="957" width="16" height="1" fill="#555"/>
<path d="M484 946v8l4-4z" fill="#000"/>
<rect x="508" y="714" width="759" height="247" fill="#ffffff"/>
<rect x="508" y="714" width="759" height="1" fill="#000"/>
<rect x="508" y="714" width="1" height="247" fill="#000"/>
<rect x="1266" y="714" width="1" height="247" fill="#000"/>
<rect x="508" y="960" width="759" height="1" fill="#000"/>
<rect x="509" y="715" width="757" height="16" fill="url(#bg)"/>
<rect x="509" y="715" width="331" height="1" fill="#fff"/>
<rect x="509" y="715" width="1" height="15" fill="#fff"/>
<rect x="839" y="716" width="1" height="14" fill="url(#shd)"/>
<rect x="510" y="729" width="330" height="1" fill="url(#shd)"/>
<rect x="840" y="715" width="1" height="15" fill="#000"/>
<rect x="841" y="715" width="90" height="1" fill="#fff"/>
<rect x="841" y="715" width="1" height="15" fill="#fff"/>
<rect x="930" y="716" width="1" height="14" fill="url(#shd)"/>
<rect x="842" y="729" width="89" height="1" fill="url(#shd)"/>
<rect x="931" y="715" width="1" height="15" fill="#000"/>
<path d="M897.5 721.5h9l-4.500 5z" fill="#ccd8cc" stroke="#667788" stroke-width="1" shape-rendering="auto"/>
<rect x="932" y="715" width="334" height="16" fill="url(#face)"/>
<rect x="509" y="730" width="757" height="1" fill="#000"/>
<rect x="12" y="967" width="84" height="19" fill="#ffffff"/>
<rect x="12" y="967" width="84" height="1" fill="#555"/>
<rect x="12" y="967" width="1" height="19" fill="#555"/>
<rect x="13" y="968" width="82" height="1" fill="#000"/>
<rect x="13" y="968" width="1" height="17" fill="#000"/>
<rect x="12" y="985" width="84" height="1" fill="#ddd"/>
<rect x="95" y="967" width="1" height="19" fill="#ddd"/>
<g shape-rendering="auto"><rect x="14.500" y="970" width="4.500" height="8" rx="2" fill="#dd2211" stroke="#881100" stroke-width=".8"/><circle cx="16.800" cy="981.500" r="1.800" fill="#dd2211" stroke="#881100" stroke-width=".8"/></g>
<rect x="79" y="969" width="15" height="16" fill="url(#face)"/>
<rect x="79" y="969" width="15" height="1" fill="#fff"/>
<rect x="79" y="969" width="1" height="16" fill="#fff"/>
<rect x="93" y="969" width="1" height="16" fill="#000"/>
<rect x="79" y="984" width="15" height="1" fill="#000"/>
<rect x="92" y="970" width="1" height="14" fill="#888"/>
<rect x="80" y="983" width="13" height="1" fill="#888"/>
<path d="M83 975h7l-3.500 4z" fill="#000"/>
<rect x="100" y="965" width="258" height="20" fill="#ffffff"/>
<rect x="100" y="965" width="258" height="1" fill="#000"/>
<rect x="100" y="984" width="258" height="1" fill="#000"/>
<rect x="100" y="965" width="1" height="20" fill="#000"/>
<rect x="357" y="965" width="1" height="20" fill="#000"/>
<rect x="359" y="965" width="135" height="1" fill="#665"/>
<rect x="359" y="986" width="135" height="1" fill="#665"/>
<rect x="359" y="965" width="1" height="22" fill="#665"/>
<rect x="493" y="965" width="1" height="22" fill="#665"/>
<rect x="508" y="965" width="673" height="20" fill="#ffffff"/>
<rect x="508" y="965" width="673" height="1" fill="#000"/>
<rect x="508" y="984" width="673" height="1" fill="#000"/>
<rect x="508" y="965" width="1" height="20" fill="#000"/>
<rect x="1180" y="965" width="1" height="20" fill="#000"/>
<rect x="1184" y="965" width="83" height="1" fill="#665"/>
<rect x="1184" y="986" width="83" height="1" fill="#665"/>
<rect x="1184" y="965" width="1" height="22" fill="#665"/>
<rect x="1266" y="965" width="1" height="22" fill="#665"/>
<rect x="0" y="1002" width="1280" height="1" fill="#999"/>
<rect x="0" y="1003" width="1280" height="1" fill="#eee"/>
<rect x="2" y="1004" width="336" height="1" fill="#888"/>
<rect x="2" y="1004" width="1" height="18" fill="#888"/>
<rect x="2" y="1021" width="336" height="1" fill="#fff"/>
<rect x="337" y="1004" width="1" height="18" fill="#fff"/>
<rect x="340" y="1004" width="195" height="1" fill="#888"/>
<rect x="340" y="1004" width="1" height="18" fill="#888"/>
<rect x="340" y="1021" width="195" height="1" fill="#fff"/>
<rect x="534" y="1004" width="1" height="18" fill="#fff"/>
<rect x="537" y="1004" width="753" height="1" fill="#888"/>
<rect x="537" y="1004" width="1" height="18" fill="#888"/>
<rect x="537" y="1021" width="753" height="1" fill="#fff"/>
<rect x="1289" y="1004" width="1" height="18" fill="#fff"/>
<path d="M1278 1011l-11 11M1278 1015l-7 7M1278 1019l-3 3" stroke="#777" stroke-width="1" shape-rendering="auto"/>
<path d="M1278 1012l-10 10M1278 1016l-6 6M1278 1020l-2 2" stroke="#fff" stroke-width="1" shape-rendering="auto"/>
</svg>
<div id="txt">
<span class="t " style="left:21px;top:3.0px;font-size:13px;line-height:13px;color:#fff;font-weight:bold;transform:scaleX(0.9653);">Lphant v2.01 ( SU:58,5 DE:172,6 MEDDE:109 )</span>
<span class="t " style="left:11px;top:61.0px;font-size:13px;line-height:13px;color:#000;transform:scaleX(0.8046);">Descargas</span>
<span class="t " style="left:74px;top:61.0px;font-size:13px;line-height:13px;color:#000;transform:scaleX(0.7981);">Subidas</span>
<span class="t " style="left:131px;top:61.0px;font-size:13px;line-height:13px;color:#000;transform:scaleX(0.8278);">Buscar</span>
<span class="t " style="left:179.5px;top:61.0px;font-size:13px;line-height:13px;color:#000;transform:scaleX(0.8046);">Servidores</span>
<span class="t " style="left:243px;top:61.0px;font-size:13px;line-height:13px;color:#000;transform:scaleX(0.7841);">Amigos</span>
<span class="t " style="left:405px;top:23.73px;font-size:8px;line-height:8px;color:#fff;transform:scaleX(0.8);">550</span>
<span class="t " style="left:405px;top:48.730000000000004px;font-size:8px;line-height:8px;color:#fff;transform:scaleX(0.8);">275</span>
<span class="t " style="left:720px;top:25.0px;font-size:13px;line-height:13px;color:#000;transform:scaleX(0.8072);">Acerca  de..</span>
<span class="t " style="left:788px;top:25.0px;font-size:13px;line-height:13px;color:#000;transform:scaleX(0.7901);">&gt;</span>
<span class="t " style="left:715px;top:44.96px;font-size:9.5px;line-height:9.5px;color:#008800;transform:scaleX(0.9466);">Descargado:1,06 GB</span>
<span class="t " style="left:715px;top:60.96px;font-size:9.5px;line-height:9.5px;color:#cc1111;transform:scaleX(0.9466);">Subido:506,12 MB</span>
<span class="t " style="left:20px;top:94.0px;font-size:13px;line-height:13px;color:#000;transform:scaleX(0.7077);">Filtro:</span>
<span class="t " style="left:92px;top:94.0px;font-size:13px;line-height:13px;color:#000;transform:scaleX(0.8357);">Todos</span>
<span class="t " style="left:179px;top:94.0px;font-size:13px;line-height:13px;color:#000;transform:scaleX(0.8127);">Todos (83) 154,8 GB</span>
<span class="t " style="left:296px;top:94.0px;font-size:13px;line-height:13px;color:#999;transform:scaleX(0.8095);">Iniciados (70)  131,6 GB</span>
<span class="t " style="left:428px;top:94.0px;font-size:13px;line-height:13px;color:#999;transform:scaleX(0.8011);">Parado (13)  23,2 GB</span>
<span class="t " style="left:1103px;top:94.0px;font-size:13px;line-height:13px;color:#000;transform:scaleX(0.8103);">Añadir fichero</span>
<span class="t " style="left:1194px;top:94.0px;font-size:13px;line-height:13px;color:#000;transform:scaleX(0.8147);">Pegar fichero</span>
<span class="t " style="left:13px;top:117.0px;font-size:13px;line-height:13px;color:#000;transform:scaleX(0.8149);">Nombre del fichero</span>
<span class="t " style="left:466px;top:117.0px;font-size:13px;line-height:13px;color:#000;transform:scaleX(0.8152);">Progreso</span>
<span class="t " style="left:555px;top:117.0px;font-size:13px;line-height:13px;color:#000;transform:scaleX(0.8324);">Tamaño</span>
<span class="t " style="left:630px;top:117.0px;font-size:13px;line-height:13px;color:#000;transform:scaleX(0.8335);">Velocidad</span>
<span class="t " style="left:709px;top:117.0px;font-size:13px;line-height:13px;color:#000;transform:scaleX(0.8059);">Completado</span>
<span class="t " style="left:789px;top:117.0px;font-size:13px;line-height:13px;color:#000;transform:scaleX(0.7957);">Falta</span>
<span class="t " style="left:862px;top:117.0px;font-size:13px;line-height:13px;color:#000;transform:scaleX(0.7976);">Prioridad</span>
<span class="t " style="left:921px;top:117.0px;font-size:13px;line-height:13px;color:#000;transform:scaleX(0.8356);">Cate...</span>
<span class="t " style="left:966px;top:117.0px;font-size:13px;line-height:13px;color:#000;transform:scaleX(0.8275);">Estado</span>
<span class="t " style="left:1067px;top:117.0px;font-size:13px;line-height:13px;color:#000;transform:scaleX(0.8088);">Fuentes</span>
<span class="t " style="left:1128px;top:117.0px;font-size:13px;line-height:13px;color:#000;transform:scaleX(0.8976);">F. Útiles</span>
<span class="t " style="left:1200px;top:117.0px;font-size:13px;line-height:13px;color:#000;transform:scaleX(0.8127);">Descargas</span>
<span class="t " style="left:29.5px;top:136.0px;font-size:13px;line-height:13px;color:#000;transform:scaleX(0.8415);">360-Guitar.Hero.II.PAL.AutistasInformaticos.com.rar</span>
<span class="t " style="left:464px;top:135.0px;font-size:13px;line-height:13px;color:#fff;transform:scaleX(0.7587);">0 %</span>
<span class="t " style="left:553.5px;top:136.0px;font-size:13px;line-height:13px;color:#000;transform:scaleX(0.785);">6,38 GB</span>
<span class="t " style="left:628.5px;top:136.0px;font-size:13px;line-height:13px;color:#000;transform:scaleX(0.81);">0KB/s</span>
<span class="t " style="left:708px;top:136.0px;font-size:13px;line-height:13px;color:#000;transform:scaleX(0.785);">0</span>
<span class="t " style="left:788px;top:136.0px;font-size:13px;line-height:13px;color:#000;transform:scaleX(0.785);">6,38 GB</span>
<span class="t " style="left:860px;top:136.0px;font-size:13px;line-height:13px;color:#000;transform:scaleX(0.81);">Normal</span>
<span class="t " style="left:964px;top:136.0px;font-size:13px;line-height:13px;color:#000;transform:scaleX(0.81);">EDK:Parado</span>
<span class="t " style="left:1065.5px;top:136.0px;font-size:13px;line-height:13px;color:#000;transform:scaleX(0.785);">0</span>
<span class="t " style="left:1126.5px;top:136.0px;font-size:13px;line-height:13px;color:#000;transform:scaleX(0.785);">0</span>
<span class="t " style="left:1199px;top:136.0px;font-size:13px;line-height:13px;color:#000;transform:scaleX(0.785);">0</span>
<span class="t " style="left:37.5px;top:153.0px;font-size:13px;line-height:13px;color:#000;transform:scaleX(0.8508);">360-Pirates.of.the.Carribbean.At.Worlds.End.PAL.AutistasInformaticos.Com.rar</span>
<span class="t " style="left:464px;top:152.0px;font-size:13px;line-height:13px;color:#fff;transform:scaleX(0.7760);">25 %</span>
<span class="t " style="left:553.5px;top:153.0px;font-size:13px;line-height:13px;color:#000;transform:scaleX(0.785);">6,49 GB</span>
<span class="t " style="left:628.5px;top:153.0px;font-size:13px;line-height:13px;color:#000;transform:scaleX(0.81);">5 KB/s</span>
<span class="t " style="left:708px;top:153.0px;font-size:13px;line-height:13px;color:#000;transform:scaleX(0.785);">1,66 GB</span>
<span class="t " style="left:788px;top:153.0px;font-size:13px;line-height:13px;color:#000;transform:scaleX(0.785);">4,83 GB</span>
<span class="t " style="left:860px;top:153.0px;font-size:13px;line-height:13px;color:#000;transform:scaleX(0.81);">Normal</span>
<span class="t " style="left:964px;top:153.0px;font-size:13px;line-height:13px;color:#000;transform:scaleX(0.81);">EDK:Listo</span>
<span class="t " style="left:1065.5px;top:153.0px;font-size:13px;line-height:13px;color:#000;transform:scaleX(0.785);">147</span>
<span class="t " style="left:1126.5px;top:153.0px;font-size:13px;line-height:13px;color:#000;transform:scaleX(0.785);">138</span>
<span class="t " style="left:1199px;top:153.0px;font-size:13px;line-height:13px;color:#000;transform:scaleX(0.785);">2</span>
<span class="t " style="left:37.5px;top:170.0px;font-size:13px;line-height:13px;color:#000;transform:scaleX(0.8242);">360-Rumble  Roses.XX  PAL.AutistasInformaticos.Com.rar</span>
<span class="t " style="left:464px;top:169.0px;font-size:13px;line-height:13px;color:#fff;transform:scaleX(0.7760);">13 %</span>
<span class="t " style="left:553.5px;top:170.0px;font-size:13px;line-height:13px;color:#000;transform:scaleX(0.785);">5,26 GB</span>
<span class="t " style="left:628.5px;top:170.0px;font-size:13px;line-height:13px;color:#000;transform:scaleX(0.81);">0KB/s</span>
<span class="t " style="left:708px;top:170.0px;font-size:13px;line-height:13px;color:#000;transform:scaleX(0.785);">700,47 MB</span>
<span class="t " style="left:788px;top:170.0px;font-size:13px;line-height:13px;color:#000;transform:scaleX(0.785);">4,58 GB</span>
<span class="t " style="left:860px;top:170.0px;font-size:13px;line-height:13px;color:#000;transform:scaleX(0.81);">Normal</span>
<span class="t " style="left:920px;top:170.0px;font-size:13px;line-height:13px;color:#000;transform:scaleX(0.81);">C</span>
<span class="t " style="left:964px;top:170.0px;font-size:13px;line-height:13px;color:#000;transform:scaleX(0.81);">EDK:Listo</span>
<span class="t " style="left:1065.5px;top:170.0px;font-size:13px;line-height:13px;color:#000;transform:scaleX(0.785);">46</span>
<span class="t " style="left:1126.5px;top:170.0px;font-size:13px;line-height:13px;color:#000;transform:scaleX(0.785);">43</span>
<span class="t " style="left:1199px;top:170.0px;font-size:13px;line-height:13px;color:#000;transform:scaleX(0.785);">0</span>
<span class="t " style="left:36.5px;top:187.0px;font-size:13px;line-height:13px;color:#000;transform:scaleX(0.8685);">XBOX360-Blazing.Angels.Squadrons.of.WWII.PAL.www.Autistasinformaticos.com....</span>
<span class="t " style="left:464px;top:186.0px;font-size:13px;line-height:13px;color:#fff;transform:scaleX(0.7760);">24 %</span>
<span class="t " style="left:553.5px;top:187.0px;font-size:13px;line-height:13px;color:#000;transform:scaleX(0.785);">5,86 GB</span>
<span class="t " style="left:628.5px;top:187.0px;font-size:13px;line-height:13px;color:#000;transform:scaleX(0.81);">0KB/s</span>
<span class="t " style="left:708px;top:187.0px;font-size:13px;line-height:13px;color:#000;transform:scaleX(0.785);">1,41 GB</span>
<span class="t " style="left:788px;top:187.0px;font-size:13px;line-height:13px;color:#000;transform:scaleX(0.785);">4,44 GB</span>
<span class="t " style="left:860px;top:187.0px;font-size:13px;line-height:13px;color:#000;transform:scaleX(0.81);">Normal</span>
<span class="t " style="left:920px;top:187.0px;font-size:13px;line-height:13px;color:#000;transform:scaleX(0.81);">C</span>
<span class="t " style="left:964px;top:187.0px;font-size:13px;line-height:13px;color:#000;transform:scaleX(0.81);">EDK:Listo</span>
<span class="t " style="left:1065.5px;top:187.0px;font-size:13px;line-height:13px;color:#000;transform:scaleX(0.785);">139</span>
<span class="t " style="left:1126.5px;top:187.0px;font-size:13px;line-height:13px;color:#000;transform:scaleX(0.785);">126</span>
<span class="t " style="left:1199px;top:187.0px;font-size:13px;line-height:13px;color:#000;transform:scaleX(0.785);">0</span>
<span class="t " style="left:36.5px;top:204.0px;font-size:13px;line-height:13px;color:#000;transform:scaleX(0.8384);">XBOX360-FEAR.PAL.AutistasInformaticos.rar</span>
<span class="t " style="left:464px;top:203.0px;font-size:13px;line-height:13px;color:#fff;transform:scaleX(0.7760);">30 %</span>
<span class="t " style="left:553.5px;top:204.0px;font-size:13px;line-height:13px;color:#000;transform:scaleX(0.785);">6,36 GB</span>
<span class="t " style="left:628.5px;top:204.0px;font-size:13px;line-height:13px;color:#000;transform:scaleX(0.81);">0KB/s</span>
<span class="t " style="left:708px;top:204.0px;font-size:13px;line-height:13px;color:#000;transform:scaleX(0.785);">1,97 GB</span>
<span class="t " style="left:788px;top:204.0px;font-size:13px;line-height:13px;color:#000;transform:scaleX(0.785);">4,41 GB</span>
<span class="t " style="left:860px;top:204.0px;font-size:13px;line-height:13px;color:#000;transform:scaleX(0.81);">Normal</span>
<span class="t " style="left:964px;top:204.0px;font-size:13px;line-height:13px;color:#000;transform:scaleX(0.81);">EDK:Listo</span>
<span class="t " style="left:1065.5px;top:204.0px;font-size:13px;line-height:13px;color:#000;transform:scaleX(0.785);">80</span>
<span class="t " style="left:1126.5px;top:204.0px;font-size:13px;line-height:13px;color:#000;transform:scaleX(0.785);">78</span>
<span class="t " style="left:1199px;top:204.0px;font-size:13px;line-height:13px;color:#000;transform:scaleX(0.785);">0</span>
<span class="t " style="left:29.5px;top:221.0px;font-size:13px;line-height:13px;color:#000;transform:scaleX(0.8472);">Pulse.DVDR.[Audio.Dual].[Eng-Spa].[www.MoviesDVDR.com].iso</span>
<span class="t " style="left:464px;top:220.0px;font-size:13px;line-height:13px;color:#fff;transform:scaleX(0.7587);">0 %</span>
<span class="t " style="left:553.5px;top:221.0px;font-size:13px;line-height:13px;color:#000;transform:scaleX(0.785);">4,37 GB</span>
<span class="t " style="left:628.5px;top:221.0px;font-size:13px;line-height:13px;color:#000;transform:scaleX(0.81);">0KB/s</span>
<span class="t " style="left:708px;top:221.0px;font-size:13px;line-height:13px;color:#000;transform:scaleX(0.785);">2,14 MB</span>
<span class="t " style="left:788px;top:221.0px;font-size:13px;line-height:13px;color:#000;transform:scaleX(0.785);">4,37 GB</span>
<span class="t " style="left:860px;top:221.0px;font-size:13px;line-height:13px;color:#000;transform:scaleX(0.81);">Normal</span>
<span class="t " style="left:964px;top:221.0px;font-size:13px;line-height:13px;color:#000;transform:scaleX(0.81);">BT:Parado</span>
<span class="t " style="left:1065.5px;top:221.0px;font-size:13px;line-height:13px;color:#000;transform:scaleX(0.785);">0</span>
<span class="t " style="left:1126.5px;top:221.0px;font-size:13px;line-height:13px;color:#000;transform:scaleX(0.785);">0</span>
<span class="t " style="left:1199px;top:221.0px;font-size:13px;line-height:13px;color:#000;transform:scaleX(0.785);">0</span>
<span class="t " style="left:29.5px;top:238.0px;font-size:13px;line-height:13px;color:#000;transform:scaleX(0.8515);">Apocalypto.DVDR.[V.O.].[Sub.Spa.Eng.Fre.].[www.MoviesDVDR.com].rar</span>
<span class="t " style="left:464px;top:237.0px;font-size:13px;line-height:13px;color:#fff;transform:scaleX(0.7587);">0 %</span>
<span class="t " style="left:553.5px;top:238.0px;font-size:13px;line-height:13px;color:#000;transform:scaleX(0.785);">4,37 GB</span>
<span class="t " style="left:628.5px;top:238.0px;font-size:13px;line-height:13px;color:#000;transform:scaleX(0.81);">11,7 KB/s</span>
<span class="t " style="left:708px;top:238.0px;font-size:13px;line-height:13px;color:#000;transform:scaleX(0.785);">19,83 MB</span>
<span class="t " style="left:788px;top:238.0px;font-size:13px;line-height:13px;color:#000;transform:scaleX(0.785);">4,35 GB</span>
<span class="t " style="left:860px;top:238.0px;font-size:13px;line-height:13px;color:#000;transform:scaleX(0.81);">Normal</span>
<span class="t " style="left:964px;top:238.0px;font-size:13px;line-height:13px;color:#000;transform:scaleX(0.81);">EDK:Listo BT:Listo</span>
<span class="t " style="left:1065.5px;top:238.0px;font-size:13px;line-height:13px;color:#000;transform:scaleX(0.785);">269</span>
<span class="t " style="left:1126.5px;top:238.0px;font-size:13px;line-height:13px;color:#000;transform:scaleX(0.785);">254</span>
<span class="t " style="left:1199px;top:238.0px;font-size:13px;line-height:13px;color:#000;transform:scaleX(0.785);">5</span>
<span class="t " style="left:29.5px;top:255.0px;font-size:13px;line-height:13px;color:#000;transform:scaleX(0.8522);">Hijos.De.Los.Hombres.DVDR.[Audio.Dual].[Eng-Spa].[www.MoviesDVDR.com].iso</span>
<span class="t " style="left:464px;top:254.0px;font-size:13px;line-height:13px;color:#fff;transform:scaleX(0.7587);">0 %</span>
<span class="t " style="left:553.5px;top:255.0px;font-size:13px;line-height:13px;color:#000;transform:scaleX(0.785);">4,33 GB</span>
<span class="t " style="left:628.5px;top:255.0px;font-size:13px;line-height:13px;color:#000;transform:scaleX(0.81);">0KB/s</span>
<span class="t " style="left:708px;top:255.0px;font-size:13px;line-height:13px;color:#000;transform:scaleX(0.785);">0</span>
<span class="t " style="left:788px;top:255.0px;font-size:13px;line-height:13px;color:#000;transform:scaleX(0.785);">4,33 GB</span>
<span class="t " style="left:860px;top:255.0px;font-size:13px;line-height:13px;color:#000;transform:scaleX(0.81);">Normal</span>
<span class="t " style="left:964px;top:255.0px;font-size:13px;line-height:13px;color:#000;transform:scaleX(0.7884);">EDK:Listo  BT:Par...</span>
<span class="t " style="left:1065.5px;top:255.0px;font-size:13px;line-height:13px;color:#000;transform:scaleX(0.785);">13</span>
<span class="t " style="left:1126.5px;top:255.0px;font-size:13px;line-height:13px;color:#000;transform:scaleX(0.785);">13</span>
<span class="t " style="left:1199px;top:255.0px;font-size:13px;line-height:13px;color:#000;transform:scaleX(0.785);">0</span>
<span class="t " style="left:29.5px;top:272.0px;font-size:13px;line-height:13px;color:#000;transform:scaleX(0.8255);">Los  Borgia[www.MoviesDVDR.com][Johnnygan].ISO</span>
<span class="t " style="left:464px;top:271.0px;font-size:13px;line-height:13px;color:#fff;transform:scaleX(0.7587);">0 %</span>
<span class="t " style="left:553.5px;top:272.0px;font-size:13px;line-height:13px;color:#000;transform:scaleX(0.785);">4,36 GB</span>
<span class="t " style="left:628.5px;top:272.0px;font-size:13px;line-height:13px;color:#000;transform:scaleX(0.81);">8,5 KB/s</span>
<span class="t " style="left:708px;top:272.0px;font-size:13px;line-height:13px;color:#000;transform:scaleX(0.785);">43,3 MB</span>
<span class="t " style="left:788px;top:272.0px;font-size:13px;line-height:13px;color:#000;transform:scaleX(0.785);">4,32 GB</span>
<span class="t " style="left:860px;top:272.0px;font-size:13px;line-height:13px;color:#000;transform:scaleX(0.81);">Normal</span>
<span class="t " style="left:964px;top:272.0px;font-size:13px;line-height:13px;color:#000;transform:scaleX(0.81);">EDK:Listo BT:Listo</span>
<span class="t " style="left:1065.5px;top:272.0px;font-size:13px;line-height:13px;color:#000;transform:scaleX(0.785);">212</span>
<span class="t " style="left:1126.5px;top:272.0px;font-size:13px;line-height:13px;color:#000;transform:scaleX(0.785);">183</span>
<span class="t " style="left:1199px;top:272.0px;font-size:13px;line-height:13px;color:#000;transform:scaleX(0.785);">15</span>
<span class="t " style="left:29.5px;top:289.0px;font-size:13px;line-height:13px;color:#000;transform:scaleX(0.8519);">Tirante.El.Blanco.DVDR.[Audio.Dual].[Eng-Spa].[www.MoviesDVDR.com].iso</span>
<span class="t " style="left:464px;top:288.0px;font-size:13px;line-height:13px;color:#fff;transform:scaleX(0.7587);">1 %</span>
<span class="t " style="left:553.5px;top:289.0px;font-size:13px;line-height:13px;color:#000;transform:scaleX(0.785);">4,33 GB</span>
<span class="t " style="left:628.5px;top:289.0px;font-size:13px;line-height:13px;color:#000;transform:scaleX(0.81);">0KB/s</span>
<span class="t " style="left:708px;top:289.0px;font-size:13px;line-height:13px;color:#000;transform:scaleX(0.785);">88,03 MB</span>
<span class="t " style="left:788px;top:289.0px;font-size:13px;line-height:13px;color:#000;transform:scaleX(0.785);">4,24 GB</span>
<span class="t " style="left:860px;top:289.0px;font-size:13px;line-height:13px;color:#000;transform:scaleX(0.81);">Normal</span>
<span class="t " style="left:964px;top:289.0px;font-size:13px;line-height:13px;color:#000;transform:scaleX(0.81);">EDK:Listo BT:Listo</span>
<span class="t " style="left:1065.5px;top:289.0px;font-size:13px;line-height:13px;color:#000;transform:scaleX(0.785);">11</span>
<span class="t " style="left:1126.5px;top:289.0px;font-size:13px;line-height:13px;color:#000;transform:scaleX(0.785);">7</span>
<span class="t " style="left:1199px;top:289.0px;font-size:13px;line-height:13px;color:#000;transform:scaleX(0.785);">1</span>
<span class="t " style="left:29.5px;top:306.0px;font-size:13px;line-height:13px;color:#000;transform:scaleX(0.8253);">La  Naranja  Mecanica[www.MoviesDVDR.com][Johnnygan].ISO</span>
<span class="t " style="left:464px;top:305.0px;font-size:13px;line-height:13px;color:#fff;transform:scaleX(0.7587);">3 %</span>
<span class="t " style="left:553.5px;top:306.0px;font-size:13px;line-height:13px;color:#000;transform:scaleX(0.785);">4,36 GB</span>
<span class="t " style="left:628.5px;top:306.0px;font-size:13px;line-height:13px;color:#000;transform:scaleX(0.81);">46,3 KB/s</span>
<span class="t " style="left:708px;top:306.0px;font-size:13px;line-height:13px;color:#000;transform:scaleX(0.785);">136,5 MB</span>
<span class="t " style="left:788px;top:306.0px;font-size:13px;line-height:13px;color:#000;transform:scaleX(0.785);">4,23 GB</span>
<span class="t " style="left:860px;top:306.0px;font-size:13px;line-height:13px;color:#000;transform:scaleX(0.81);">Normal</span>
<span class="t " style="left:964px;top:306.0px;font-size:13px;line-height:13px;color:#000;transform:scaleX(0.81);">EDK:Listo BT:Listo</span>
<span class="t " style="left:1065.5px;top:306.0px;font-size:13px;line-height:13px;color:#000;transform:scaleX(0.785);">82</span>
<span class="t " style="left:1126.5px;top:306.0px;font-size:13px;line-height:13px;color:#000;transform:scaleX(0.785);">75</span>
<span class="t " style="left:1199px;top:306.0px;font-size:13px;line-height:13px;color:#000;transform:scaleX(0.785);">6</span>
<span class="t " style="left:37.5px;top:323.0px;font-size:13px;line-height:13px;color:#000;transform:scaleX(0.8429);">Casino.Royale.DVDR.[Multi].[www.MoviesDVDR.com].iso</span>
<span class="t " style="left:464px;top:322.0px;font-size:13px;line-height:13px;color:#fff;transform:scaleX(0.7587);">3 %</span>
<span class="t " style="left:553.5px;top:323.0px;font-size:13px;line-height:13px;color:#000;transform:scaleX(0.785);">4,37 GB</span>
<span class="t " style="left:628.5px;top:323.0px;font-size:13px;line-height:13px;color:#000;transform:scaleX(0.81);">9,6 KB/s</span>
<span class="t " style="left:708px;top:323.0px;font-size:13px;line-height:13px;color:#000;transform:scaleX(0.785);">154,63 MB</span>
<span class="t " style="left:788px;top:323.0px;font-size:13px;line-height:13px;color:#000;transform:scaleX(0.785);">4,22 GB</span>
<span class="t " style="left:860px;top:323.0px;font-size:13px;line-height:13px;color:#000;transform:scaleX(0.81);">Normal</span>
<span class="t " style="left:964px;top:323.0px;font-size:13px;line-height:13px;color:#000;transform:scaleX(0.81);">EDK:Listo BT:Listo</span>
<span class="t " style="left:1065.5px;top:323.0px;font-size:13px;line-height:13px;color:#000;transform:scaleX(0.785);">190</span>
<span class="t " style="left:1126.5px;top:323.0px;font-size:13px;line-height:13px;color:#000;transform:scaleX(0.785);">174</span>
<span class="t " style="left:1199px;top:323.0px;font-size:13px;line-height:13px;color:#000;transform:scaleX(0.785);">6</span>
<span class="t " style="left:29.5px;top:340.0px;font-size:13px;line-height:13px;color:#000;transform:scaleX(0.8507);">El.Ultimo.Samurai.DVDR.[Audio.Dual].[Eng-Spa].[www.MoviesDVDR.com].nrg</span>
<span class="t " style="left:464px;top:339.0px;font-size:13px;line-height:13px;color:#fff;transform:scaleX(0.7587);">3 %</span>
<span class="t " style="left:553.5px;top:340.0px;font-size:13px;line-height:13px;color:#000;transform:scaleX(0.785);">4,36 GB</span>
<span class="t " style="left:628.5px;top:340.0px;font-size:13px;line-height:13px;color:#000;transform:scaleX(0.81);">0KB/s</span>
<span class="t " style="left:708px;top:340.0px;font-size:13px;line-height:13px;color:#000;transform:scaleX(0.785);">148,64 MB</span>
<span class="t " style="left:788px;top:340.0px;font-size:13px;line-height:13px;color:#000;transform:scaleX(0.785);">4,22 GB</span>
<span class="t " style="left:860px;top:340.0px;font-size:13px;line-height:13px;color:#000;transform:scaleX(0.81);">Alta</span>
<span class="t " style="left:964px;top:340.0px;font-size:13px;line-height:13px;color:#000;transform:scaleX(0.81);">EDK:Listo BT:Listo</span>
<span class="t " style="left:1065.5px;top:340.0px;font-size:13px;line-height:13px;color:#000;transform:scaleX(0.785);">95</span>
<span class="t " style="left:1126.5px;top:340.0px;font-size:13px;line-height:13px;color:#000;transform:scaleX(0.785);">2</span>
<span class="t " style="left:1199px;top:340.0px;font-size:13px;line-height:13px;color:#000;transform:scaleX(0.785);">0</span>
<span class="t " style="left:29.5px;top:357.0px;font-size:13px;line-height:13px;color:#000;transform:scaleX(0.8182);">Crash  [DvdFull][Dual  Es  Dts-5.1_En  5.1][Sub  Spanish][Extras][www.newpct.com]</span>
<span class="t " style="left:464px;top:356.0px;font-size:13px;line-height:13px;color:#fff;transform:scaleX(0.7587);">9 %</span>
<span class="t " style="left:553.5px;top:357.0px;font-size:13px;line-height:13px;color:#000;transform:scaleX(0.785);">4,36 GB</span>
<span class="t " style="left:628.5px;top:357.0px;font-size:13px;line-height:13px;color:#000;transform:scaleX(0.81);">56,7 KB/s</span>
<span class="t " style="left:708px;top:357.0px;font-size:13px;line-height:13px;color:#000;transform:scaleX(0.785);">432,23 MB</span>
<span class="t " style="left:788px;top:357.0px;font-size:13px;line-height:13px;color:#000;transform:scaleX(0.785);">3,94 GB</span>
<span class="t " style="left:860px;top:357.0px;font-size:13px;line-height:13px;color:#000;transform:scaleX(0.81);">Normal</span>
<span class="t " style="left:964px;top:357.0px;font-size:13px;line-height:13px;color:#000;transform:scaleX(0.81);">BT:Listo</span>
<span class="t " style="left:1065.5px;top:357.0px;font-size:13px;line-height:13px;color:#000;transform:scaleX(0.785);">9</span>
<span class="t " style="left:1126.5px;top:357.0px;font-size:13px;line-height:13px;color:#000;transform:scaleX(0.785);">9</span>
<span class="t " style="left:1199px;top:357.0px;font-size:13px;line-height:13px;color:#000;transform:scaleX(0.785);">4</span>
<span class="t " style="left:29.5px;top:374.0px;font-size:13px;line-height:13px;color:#000;transform:scaleX(0.8298);">The complete kiteboarding guide español.rar</span>
<span class="t " style="left:464px;top:373.0px;font-size:13px;line-height:13px;color:#fff;transform:scaleX(0.7587);">0 %</span>
<span class="t " style="left:553.5px;top:374.0px;font-size:13px;line-height:13px;color:#000;transform:scaleX(0.785);">3,83 GB</span>
<span class="t " style="left:628.5px;top:374.0px;font-size:13px;line-height:13px;color:#000;transform:scaleX(0.81);">0KB/s</span>
<span class="t " style="left:708px;top:374.0px;font-size:13px;line-height:13px;color:#000;transform:scaleX(0.785);">0</span>
<span class="t " style="left:788px;top:374.0px;font-size:13px;line-height:13px;color:#000;transform:scaleX(0.785);">3,83 GB</span>
<span class="t " style="left:860px;top:374.0px;font-size:13px;line-height:13px;color:#000;transform:scaleX(0.81);">Normal</span>
<span class="t " style="left:964px;top:374.0px;font-size:13px;line-height:13px;color:#000;transform:scaleX(0.81);">EDK:Parado</span>
<span class="t " style="left:1065.5px;top:374.0px;font-size:13px;line-height:13px;color:#000;transform:scaleX(0.785);">0</span>
<span class="t " style="left:1126.5px;top:374.0px;font-size:13px;line-height:13px;color:#000;transform:scaleX(0.785);">0</span>
<span class="t " style="left:1199px;top:374.0px;font-size:13px;line-height:13px;color:#000;transform:scaleX(0.785);">0</span>
<span class="t " style="left:37.5px;top:391.0px;font-size:13px;line-height:13px;color:#000;transform:scaleX(0.8210);">360-UEFA  Champions  League  2006-2007  PAL-[www.xbox-rip.com].rar</span>
<span class="t " style="left:464px;top:390.0px;font-size:13px;line-height:13px;color:#fff;transform:scaleX(0.7760);">43 %</span>
<span class="t " style="left:553.5px;top:391.0px;font-size:13px;line-height:13px;color:#000;transform:scaleX(0.785);">6,59 GB</span>
<span class="t " style="left:628.5px;top:391.0px;font-size:13px;line-height:13px;color:#000;transform:scaleX(0.81);">3 KB/s</span>
<span class="t " style="left:708px;top:391.0px;font-size:13px;line-height:13px;color:#000;transform:scaleX(0.785);">2,92 GB</span>
<span class="t " style="left:788px;top:391.0px;font-size:13px;line-height:13px;color:#000;transform:scaleX(0.785);">3,71 GB</span>
<span class="t " style="left:860px;top:391.0px;font-size:13px;line-height:13px;color:#000;transform:scaleX(0.81);">Normal</span>
<span class="t " style="left:964px;top:391.0px;font-size:13px;line-height:13px;color:#000;transform:scaleX(0.81);">EDK:Listo</span>
<span class="t " style="left:1065.5px;top:391.0px;font-size:13px;line-height:13px;color:#000;transform:scaleX(0.785);">56</span>
<span class="t " style="left:1126.5px;top:391.0px;font-size:13px;line-height:13px;color:#000;transform:scaleX(0.785);">54</span>
<span class="t " style="left:1199px;top:391.0px;font-size:13px;line-height:13px;color:#000;transform:scaleX(0.785);">1</span>
<span class="t " style="left:29.5px;top:408.0px;font-size:13px;line-height:13px;color:#000;transform:scaleX(0.8198);">LA_COSA(The  Thing)  DVR[Eng-Spa].[www.MoviesDVD.com]  By  el-Fillo.ISO</span>
<span class="t " style="left:464px;top:407.0px;font-size:13px;line-height:13px;color:#fff;transform:scaleX(0.7760);">25 %</span>
<span class="t " style="left:553.5px;top:408.0px;font-size:13px;line-height:13px;color:#000;transform:scaleX(0.785);">4,36 GB</span>
<span class="t " style="left:628.5px;top:408.0px;font-size:13px;line-height:13px;color:#000;transform:scaleX(0.81);">0KB/s</span>
<span class="t " style="left:708px;top:408.0px;font-size:13px;line-height:13px;color:#000;transform:scaleX(0.785);">1,14 GB</span>
<span class="t " style="left:788px;top:408.0px;font-size:13px;line-height:13px;color:#000;transform:scaleX(0.785);">3,26 GB</span>
<span class="t " style="left:860px;top:408.0px;font-size:13px;line-height:13px;color:#000;transform:scaleX(0.81);">Normal</span>
<span class="t " style="left:920px;top:408.0px;font-size:13px;line-height:13px;color:#000;transform:scaleX(0.81);">C</span>
<span class="t " style="left:964px;top:408.0px;font-size:13px;line-height:13px;color:#000;transform:scaleX(0.81);">EDK:Listo BT:Listo</span>
<span class="t " style="left:1065.5px;top:408.0px;font-size:13px;line-height:13px;color:#000;transform:scaleX(0.785);">36</span>
<span class="t " style="left:1126.5px;top:408.0px;font-size:13px;line-height:13px;color:#000;transform:scaleX(0.785);">0</span>
<span class="t " style="left:1199px;top:408.0px;font-size:13px;line-height:13px;color:#000;transform:scaleX(0.785);">0</span>
<span class="t " style="left:36.5px;top:425.0px;font-size:13px;line-height:13px;color:#000;transform:scaleX(0.7945);">Yngwie Malmsteen  -  Live  At  Budokan  (DVD-R)  -  Ego_Shredder.ISO</span>
<span class="t " style="left:464px;top:424.0px;font-size:13px;line-height:13px;color:#fff;transform:scaleX(0.7760);">28 %</span>
<span class="t " style="left:553.5px;top:425.0px;font-size:13px;line-height:13px;color:#000;transform:scaleX(0.785);">4,36 GB</span>
<span class="t " style="left:628.5px;top:425.0px;font-size:13px;line-height:13px;color:#000;transform:scaleX(0.81);">0KB/s</span>
<span class="t " style="left:708px;top:425.0px;font-size:13px;line-height:13px;color:#000;transform:scaleX(0.785);">1,25 GB</span>
<span class="t " style="left:788px;top:425.0px;font-size:13px;line-height:13px;color:#000;transform:scaleX(0.785);">3,11 GB</span>
<span class="t " style="left:860px;top:425.0px;font-size:13px;line-height:13px;color:#000;transform:scaleX(0.81);">Normal</span>
<span class="t " style="left:920px;top:425.0px;font-size:13px;line-height:13px;color:#000;transform:scaleX(0.81);">C</span>
<span class="t " style="left:964px;top:425.0px;font-size:13px;line-height:13px;color:#000;transform:scaleX(0.81);">EDK:Listo</span>
<span class="t " style="left:1065.5px;top:425.0px;font-size:13px;line-height:13px;color:#000;transform:scaleX(0.785);">53</span>
<span class="t " style="left:1126.5px;top:425.0px;font-size:13px;line-height:13px;color:#000;transform:scaleX(0.785);">51</span>
<span class="t " style="left:1199px;top:425.0px;font-size:13px;line-height:13px;color:#000;transform:scaleX(0.785);">0</span>
<span class="t " style="left:43px;top:442.0px;font-size:13px;line-height:13px;color:#000;transform:scaleX(0.8322);">Earth_Defense_Force_2017-USA-XBOX360-DAGGER</span>
<span class="t " style="left:464px;top:441.0px;font-size:13px;line-height:13px;color:#fff;transform:scaleX(0.7760);">67 %</span>
<span class="t " style="left:553.5px;top:442.0px;font-size:13px;line-height:13px;color:#000;transform:scaleX(0.785);">6,66 GB</span>
<span class="t " style="left:628.5px;top:442.0px;font-size:13px;line-height:13px;color:#000;transform:scaleX(0.81);">0KB/s</span>
<span class="t " style="left:708px;top:442.0px;font-size:13px;line-height:13px;color:#000;transform:scaleX(0.81);">5,1 GB</span>
<span class="t " style="left:788px;top:442.0px;font-size:13px;line-height:13px;color:#000;transform:scaleX(0.785);">2,14 GB</span>
<span class="t " style="left:860px;top:442.0px;font-size:13px;line-height:13px;color:#000;transform:scaleX(0.81);">Alta</span>
<span class="t " style="left:920px;top:442.0px;font-size:13px;line-height:13px;color:#000;transform:scaleX(0.81);">C</span>
<span class="t " style="left:964px;top:442.0px;font-size:13px;line-height:13px;color:#000;transform:scaleX(0.81);">BT:Listo</span>
<span class="t " style="left:1065.5px;top:442.0px;font-size:13px;line-height:13px;color:#000;transform:scaleX(0.785);">0</span>
<span class="t " style="left:1126.5px;top:442.0px;font-size:13px;line-height:13px;color:#000;transform:scaleX(0.785);">0</span>
<span class="t " style="left:1199px;top:442.0px;font-size:13px;line-height:13px;color:#000;transform:scaleX(0.785);">0</span>
<span class="t " style="left:29.5px;top:459.0px;font-size:13px;line-height:13px;color:#000;transform:scaleX(0.8499);">[La.Milla.Verde].[DVDR].Spanish.[ferruje].[www.todompg.com]_VTS_01_1.VOB</span>
<span class="t " style="left:464px;top:458.0px;font-size:13px;line-height:13px;color:#fff;transform:scaleX(0.7587);">0 %</span>
<span class="t " style="left:553.5px;top:459.0px;font-size:13px;line-height:13px;color:#000;transform:scaleX(0.785);">1024 MB</span>
<span class="t " style="left:628.5px;top:459.0px;font-size:13px;line-height:13px;color:#000;transform:scaleX(0.81);">0KB/s</span>
<span class="t " style="left:708px;top:459.0px;font-size:13px;line-height:13px;color:#000;transform:scaleX(0.785);">0</span>
<span class="t " style="left:788px;top:459.0px;font-size:13px;line-height:13px;color:#000;transform:scaleX(0.785);">1024 MB</span>
<span class="t " style="left:860px;top:459.0px;font-size:13px;line-height:13px;color:#000;transform:scaleX(0.81);">Normal</span>
<span class="t " style="left:964px;top:459.0px;font-size:13px;line-height:13px;color:#000;transform:scaleX(0.81);">EDK:Parado</span>
<span class="t " style="left:1065.5px;top:459.0px;font-size:13px;line-height:13px;color:#000;transform:scaleX(0.785);">0</span>
<span class="t " style="left:1126.5px;top:459.0px;font-size:13px;line-height:13px;color:#000;transform:scaleX(0.785);">0</span>
<span class="t " style="left:1199px;top:459.0px;font-size:13px;line-height:13px;color:#000;transform:scaleX(0.785);">0</span>
<span class="t " style="left:29.5px;top:476.0px;font-size:13px;line-height:13px;color:#000;transform:scaleX(0.8499);">[La.Milla.Verde].[DVDR].Spanish.[ferruje].[www.todompg.com]_VTS_01_2.VOB</span>
<span class="t " style="left:464px;top:475.0px;font-size:13px;line-height:13px;color:#fff;transform:scaleX(0.7587);">0 %</span>
<span class="t " style="left:553.5px;top:476.0px;font-size:13px;line-height:13px;color:#000;transform:scaleX(0.785);">1024 MB</span>
<span class="t " style="left:628.5px;top:476.0px;font-size:13px;line-height:13px;color:#000;transform:scaleX(0.81);">0KB/s</span>
<span class="t " style="left:708px;top:476.0px;font-size:13px;line-height:13px;color:#000;transform:scaleX(0.785);">0</span>
<span class="t " style="left:788px;top:476.0px;font-size:13px;line-height:13px;color:#000;transform:scaleX(0.785);">1024 MB</span>
<span class="t " style="left:860px;top:476.0px;font-size:13px;line-height:13px;color:#000;transform:scaleX(0.81);">Normal</span>
<span class="t " style="left:964px;top:476.0px;font-size:13px;line-height:13px;color:#000;transform:scaleX(0.81);">EDK:Parado</span>
<span class="t " style="left:1065.5px;top:476.0px;font-size:13px;line-height:13px;color:#000;transform:scaleX(0.785);">0</span>
<span class="t " style="left:1126.5px;top:476.0px;font-size:13px;line-height:13px;color:#000;transform:scaleX(0.785);">0</span>
<span class="t " style="left:1199px;top:476.0px;font-size:13px;line-height:13px;color:#000;transform:scaleX(0.785);">0</span>
<span class="t " style="left:29.5px;top:493.0px;font-size:13px;line-height:13px;color:#000;transform:scaleX(0.8499);">[La.Milla.Verde].[DVDR].Spanish.[ferruje].[www.todompg.com]_VTS_01_3.VOB</span>
<span class="t " style="left:464px;top:492.0px;font-size:13px;line-height:13px;color:#fff;transform:scaleX(0.7587);">0 %</span>
<span class="t " style="left:553.5px;top:493.0px;font-size:13px;line-height:13px;color:#000;transform:scaleX(0.785);">1024 MB</span>
<span class="t " style="left:628.5px;top:493.0px;font-size:13px;line-height:13px;color:#000;transform:scaleX(0.81);">0KB/s</span>
<span class="t " style="left:708px;top:493.0px;font-size:13px;line-height:13px;color:#000;transform:scaleX(0.785);">0</span>
<span class="t " style="left:788px;top:493.0px;font-size:13px;line-height:13px;color:#000;transform:scaleX(0.785);">1024 MB</span>
<span class="t " style="left:860px;top:493.0px;font-size:13px;line-height:13px;color:#000;transform:scaleX(0.81);">Normal</span>
<span class="t " style="left:964px;top:493.0px;font-size:13px;line-height:13px;color:#000;transform:scaleX(0.81);">EDK:Parado</span>
<span class="t " style="left:1065.5px;top:493.0px;font-size:13px;line-height:13px;color:#000;transform:scaleX(0.785);">0</span>
<span class="t " style="left:1126.5px;top:493.0px;font-size:13px;line-height:13px;color:#000;transform:scaleX(0.785);">0</span>
<span class="t " style="left:1199px;top:493.0px;font-size:13px;line-height:13px;color:#000;transform:scaleX(0.785);">0</span>
<span class="t " style="left:29.5px;top:510.0px;font-size:13px;line-height:13px;color:#000;transform:scaleX(0.8499);">[La.Milla.Verde].[DVDR].Spanish.[ferruje].[www.todompg.com]_VTS_01_4.VOB</span>
<span class="t " style="left:464px;top:509.0px;font-size:13px;line-height:13px;color:#fff;transform:scaleX(0.7587);">0 %</span>
<span class="t " style="left:553.5px;top:510.0px;font-size:13px;line-height:13px;color:#000;transform:scaleX(0.785);">1024 MB</span>
<span class="t " style="left:628.5px;top:510.0px;font-size:13px;line-height:13px;color:#000;transform:scaleX(0.81);">0KB/s</span>
<span class="t " style="left:708px;top:510.0px;font-size:13px;line-height:13px;color:#000;transform:scaleX(0.785);">0</span>
<span class="t " style="left:788px;top:510.0px;font-size:13px;line-height:13px;color:#000;transform:scaleX(0.785);">1024 MB</span>
<span class="t " style="left:860px;top:510.0px;font-size:13px;line-height:13px;color:#000;transform:scaleX(0.81);">Normal</span>
<span class="t " style="left:964px;top:510.0px;font-size:13px;line-height:13px;color:#000;transform:scaleX(0.81);">EDK:Parado</span>
<span class="t " style="left:1065.5px;top:510.0px;font-size:13px;line-height:13px;color:#000;transform:scaleX(0.785);">0</span>
<span class="t " style="left:1126.5px;top:510.0px;font-size:13px;line-height:13px;color:#000;transform:scaleX(0.785);">0</span>
<span class="t " style="left:1199px;top:510.0px;font-size:13px;line-height:13px;color:#000;transform:scaleX(0.785);">0</span>
<span class="t " style="left:29.5px;top:527.0px;font-size:13px;line-height:13px;color:#000;transform:scaleX(0.8497);">El  efecto  mariposa  2.[Spanish-English][SDVDRGroup][WwW.SoLoDvDr.CoM].VTS_...</span>
<span class="t " style="left:464px;top:526.0px;font-size:13px;line-height:13px;color:#fff;transform:scaleX(0.7587);">0 %</span>
<span class="t " style="left:553.5px;top:527.0px;font-size:13px;line-height:13px;color:#000;transform:scaleX(0.785);">1024 MB</span>
<span class="t " style="left:628.5px;top:527.0px;font-size:13px;line-height:13px;color:#000;transform:scaleX(0.81);">0KB/s</span>
<span class="t " style="left:708px;top:527.0px;font-size:13px;line-height:13px;color:#000;transform:scaleX(0.785);">0</span>
<span class="t " style="left:788px;top:527.0px;font-size:13px;line-height:13px;color:#000;transform:scaleX(0.785);">1024 MB</span>
<span class="t " style="left:860px;top:527.0px;font-size:13px;line-height:13px;color:#000;transform:scaleX(0.81);">Normal</span>
<span class="t " style="left:964px;top:527.0px;font-size:13px;line-height:13px;color:#000;transform:scaleX(0.81);">EDK:Parado</span>
<span class="t " style="left:1065.5px;top:527.0px;font-size:13px;line-height:13px;color:#000;transform:scaleX(0.785);">0</span>
<span class="t " style="left:1126.5px;top:527.0px;font-size:13px;line-height:13px;color:#000;transform:scaleX(0.785);">0</span>
<span class="t " style="left:1199px;top:527.0px;font-size:13px;line-height:13px;color:#000;transform:scaleX(0.785);">0</span>
<span class="t " style="left:29.5px;top:544.0px;font-size:13px;line-height:13px;color:#000;transform:scaleX(0.8497);">El  efecto  mariposa  2.[Spanish-English][SDVDRGroup][WwW.SoLoDvDr.CoM].VTS_...</span>
<span class="t " style="left:464px;top:543.0px;font-size:13px;line-height:13px;color:#fff;transform:scaleX(0.7587);">0 %</span>
<span class="t " style="left:553.5px;top:544.0px;font-size:13px;line-height:13px;color:#000;transform:scaleX(0.785);">1024 MB</span>
<span class="t " style="left:628.5px;top:544.0px;font-size:13px;line-height:13px;color:#000;transform:scaleX(0.81);">0KB/s</span>
<span class="t " style="left:708px;top:544.0px;font-size:13px;line-height:13px;color:#000;transform:scaleX(0.785);">0</span>
<span class="t " style="left:788px;top:544.0px;font-size:13px;line-height:13px;color:#000;transform:scaleX(0.785);">1024 MB</span>
<span class="t " style="left:860px;top:544.0px;font-size:13px;line-height:13px;color:#000;transform:scaleX(0.81);">Normal</span>
<span class="t " style="left:964px;top:544.0px;font-size:13px;line-height:13px;color:#000;transform:scaleX(0.81);">EDK:Parado</span>
<span class="t " style="left:1065.5px;top:544.0px;font-size:13px;line-height:13px;color:#000;transform:scaleX(0.785);">0</span>
<span class="t " style="left:1126.5px;top:544.0px;font-size:13px;line-height:13px;color:#000;transform:scaleX(0.785);">0</span>
<span class="t " style="left:1199px;top:544.0px;font-size:13px;line-height:13px;color:#000;transform:scaleX(0.785);">0</span>
<span class="t " style="left:29.5px;top:561.0px;font-size:13px;line-height:13px;color:#000;transform:scaleX(0.8497);">El  efecto  mariposa  2.[Spanish-English][SDVDRGroup][WwW.SoLoDvDr.CoM].VTS_...</span>
<span class="t " style="left:464px;top:560.0px;font-size:13px;line-height:13px;color:#fff;transform:scaleX(0.7587);">0 %</span>
<span class="t " style="left:553.5px;top:561.0px;font-size:13px;line-height:13px;color:#000;transform:scaleX(0.785);">1024 MB</span>
<span class="t " style="left:628.5px;top:561.0px;font-size:13px;line-height:13px;color:#000;transform:scaleX(0.81);">0KB/s</span>
<span class="t " style="left:708px;top:561.0px;font-size:13px;line-height:13px;color:#000;transform:scaleX(0.785);">0</span>
<span class="t " style="left:788px;top:561.0px;font-size:13px;line-height:13px;color:#000;transform:scaleX(0.785);">1024 MB</span>
<span class="t " style="left:860px;top:561.0px;font-size:13px;line-height:13px;color:#000;transform:scaleX(0.81);">Normal</span>
<span class="t " style="left:964px;top:561.0px;font-size:13px;line-height:13px;color:#000;transform:scaleX(0.81);">EDK:Parado</span>
<span class="t " style="left:1065.5px;top:561.0px;font-size:13px;line-height:13px;color:#000;transform:scaleX(0.785);">0</span>
<span class="t " style="left:1126.5px;top:561.0px;font-size:13px;line-height:13px;color:#000;transform:scaleX(0.785);">0</span>
<span class="t " style="left:1199px;top:561.0px;font-size:13px;line-height:13px;color:#000;transform:scaleX(0.785);">0</span>
<span class="t " style="left:29.5px;top:578.0px;font-size:13px;line-height:13px;color:#000;transform:scaleX(0.8497);">El  efecto  mariposa  2.[Spanish-English][SDVDRGroup][WwW.SoLoDvDr.CoM].VTS_...</span>
<span class="t " style="left:464px;top:577.0px;font-size:13px;line-height:13px;color:#fff;transform:scaleX(0.7587);">0 %</span>
<span class="t " style="left:553.5px;top:578.0px;font-size:13px;line-height:13px;color:#000;transform:scaleX(0.785);">1024 MB</span>
<span class="t " style="left:628.5px;top:578.0px;font-size:13px;line-height:13px;color:#000;transform:scaleX(0.81);">0KB/s</span>
<span class="t " style="left:708px;top:578.0px;font-size:13px;line-height:13px;color:#000;transform:scaleX(0.785);">0</span>
<span class="t " style="left:788px;top:578.0px;font-size:13px;line-height:13px;color:#000;transform:scaleX(0.785);">1024 MB</span>
<span class="t " style="left:860px;top:578.0px;font-size:13px;line-height:13px;color:#000;transform:scaleX(0.81);">Normal</span>
<span class="t " style="left:964px;top:578.0px;font-size:13px;line-height:13px;color:#000;transform:scaleX(0.81);">EDK:Parado</span>
<span class="t " style="left:1065.5px;top:578.0px;font-size:13px;line-height:13px;color:#000;transform:scaleX(0.785);">0</span>
<span class="t " style="left:1126.5px;top:578.0px;font-size:13px;line-height:13px;color:#000;transform:scaleX(0.785);">0</span>
<span class="t " style="left:1199px;top:578.0px;font-size:13px;line-height:13px;color:#000;transform:scaleX(0.785);">0</span>
<span class="t " style="left:29.5px;top:595.0px;font-size:13px;line-height:13px;color:#000;transform:scaleX(0.8513);">(Stigmata)(DVDR)(Full)(www.SoLoDvDr.CoM)(Por.ErMonster)VTS_01_1.VOB</span>
<span class="t " style="left:464px;top:594.0px;font-size:13px;line-height:13px;color:#fff;transform:scaleX(0.7587);">0 %</span>
<span class="t " style="left:553.5px;top:595.0px;font-size:13px;line-height:13px;color:#000;transform:scaleX(0.785);">1024 MB</span>
<span class="t " style="left:628.5px;top:595.0px;font-size:13px;line-height:13px;color:#000;transform:scaleX(0.81);">0KB/s</span>
<span class="t " style="left:708px;top:595.0px;font-size:13px;line-height:13px;color:#000;transform:scaleX(0.785);">0</span>
<span class="t " style="left:788px;top:595.0px;font-size:13px;line-height:13px;color:#000;transform:scaleX(0.785);">1024 MB</span>
<span class="t " style="left:860px;top:595.0px;font-size:13px;line-height:13px;color:#000;transform:scaleX(0.81);">Normal</span>
<span class="t " style="left:964px;top:595.0px;font-size:13px;line-height:13px;color:#000;transform:scaleX(0.81);">EDK:Listo</span>
<span class="t " style="left:1065.5px;top:595.0px;font-size:13px;line-height:13px;color:#000;transform:scaleX(0.785);">8</span>
<span class="t " style="left:1126.5px;top:595.0px;font-size:13px;line-height:13px;color:#000;transform:scaleX(0.785);">6</span>
<span class="t " style="left:1199px;top:595.0px;font-size:13px;line-height:13px;color:#000;transform:scaleX(0.785);">0</span>
<span class="t " style="left:29.5px;top:612.0px;font-size:13px;line-height:13px;color:#000;transform:scaleX(0.8513);">(Stigmata)(DVDR)(Full)(www.SoLoDvDr.CoM)(Por.ErMonster)VTS_01_3.VOB</span>
<span class="t " style="left:464px;top:611.0px;font-size:13px;line-height:13px;color:#fff;transform:scaleX(0.7587);">0 %</span>
<span class="t " style="left:553.5px;top:612.0px;font-size:13px;line-height:13px;color:#000;transform:scaleX(0.785);">1024 MB</span>
<span class="t " style="left:628.5px;top:612.0px;font-size:13px;line-height:13px;color:#000;transform:scaleX(0.81);">0KB/s</span>
<span class="t " style="left:708px;top:612.0px;font-size:13px;line-height:13px;color:#000;transform:scaleX(0.785);">0</span>
<span class="t " style="left:788px;top:612.0px;font-size:13px;line-height:13px;color:#000;transform:scaleX(0.785);">1024 MB</span>
<span class="t " style="left:860px;top:612.0px;font-size:13px;line-height:13px;color:#000;transform:scaleX(0.81);">Normal</span>
<span class="t " style="left:964px;top:612.0px;font-size:13px;line-height:13px;color:#000;transform:scaleX(0.81);">EDK:Listo</span>
<span class="t " style="left:1065.5px;top:612.0px;font-size:13px;line-height:13px;color:#000;transform:scaleX(0.785);">0</span>
<span class="t " style="left:1126.5px;top:612.0px;font-size:13px;line-height:13px;color:#000;transform:scaleX(0.785);">0</span>
<span class="t " style="left:1199px;top:612.0px;font-size:13px;line-height:13px;color:#000;transform:scaleX(0.785);">0</span>
<span class="t " style="left:38px;top:665.5px;font-size:13px;line-height:13px;color:#999;transform:scaleX(0.7878);">Detalles</span>
<span class="t " style="left:108.5px;top:665.5px;font-size:13px;line-height:13px;color:#000;transform:scaleX(0.7802);">Comentarios</span>
<span class="t " style="left:199px;top:665.5px;font-size:13px;line-height:13px;color:#999;transform:scaleX(0.8088);">Fuentes</span>
<span class="t " style="left:13px;top:696.0px;font-size:13px;line-height:13px;color:#000;transform:scaleX(0.7984);">Comentarios del fichero:</span>
<span class="t " style="left:511px;top:698.0px;font-size:13px;line-height:13px;color:#000;transform:scaleX(0.8045);">Nombres del fichero:</span>
<span class="t " style="left:19px;top:717.0px;font-size:13px;line-height:13px;color:#000;transform:scaleX(0.8000);">Nombre</span>
<span class="t " style="left:209px;top:717.0px;font-size:13px;line-height:13px;color:#000;transform:scaleX(0.8599);">Valoración</span>
<span class="t " style="left:287px;top:717.0px;font-size:13px;line-height:13px;color:#000;transform:scaleX(0.8035);">Comentario</span>
<span class="t " style="left:35px;top:735.0px;font-size:13px;line-height:13px;color:#000;transform:scaleX(0.8042);">AfterNET</span>
<span class="t " style="left:207.5px;top:735.0px;font-size:13px;line-height:13px;color:#000;transform:scaleX(0.7924);">Pobre</span>
<span class="t " style="left:285.5px;top:735.0px;font-size:13px;line-height:13px;color:#000;transform:scaleX(0.8343);">como copio esta ISO para NME? solo tiene</span>
<span class="t " style="left:513px;top:717.0px;font-size:13px;line-height:13px;color:#000;transform:scaleX(0.8149);">Nombre del fichero</span>
<span class="t " style="left:845px;top:717.0px;font-size:13px;line-height:13px;color:#000;transform:scaleX(0.8088);">Fuentes</span>
<span class="t " style="left:32px;top:969.0px;font-size:13px;line-height:13px;color:#000;transform:scaleX(0.7924);">Pobre</span>
<span class="t " style="left:103px;top:967.5px;font-size:13px;line-height:13px;color:#000;transform:scaleX(0.8186);">como copio esta ISO para NME? solo tiene los SS, ni</span>
<span class="t " style="left:381.5px;top:969.0px;font-size:13px;line-height:13px;color:#000;transform:scaleX(0.8043);">Guardar comentario</span>
<span class="t " style="left:510.5px;top:967.5px;font-size:13px;line-height:13px;color:#000;transform:scaleX(0.8064);">360-Guitar.Hero.II.PAL.AutistasInformaticos.com.rar</span>
<span class="t " style="left:1200.5px;top:968.0px;font-size:13px;line-height:13px;color:#000;transform:scaleX(0.7996);">Renombrar</span>
<span class="t " style="left:6px;top:1007.0px;font-size:13px;line-height:13px;color:#000;transform:scaleX(0.8021);">082.part.met hash finalizado</span>
<span class="t " style="left:347px;top:1007.0px;font-size:13px;line-height:13px;color:#cc2222;transform:scaleX(0.8088);">SU:58,5</span>
<span class="t " style="left:402.5px;top:1007.0px;font-size:13px;line-height:13px;color:#118822;transform:scaleX(0.8194);">DE:172.</span>
<span class="t " style="left:458.5px;top:1007.0px;font-size:13px;line-height:13px;color:#336699;transform:scaleX(0.8235);">MEDDE:109</span>
<span class="t " style="left:540px;top:1007.0px;font-size:13px;line-height:13px;color:#000;transform:scaleX(0.8104);">DonkevServer No1</span>
</div>
</body></html>
